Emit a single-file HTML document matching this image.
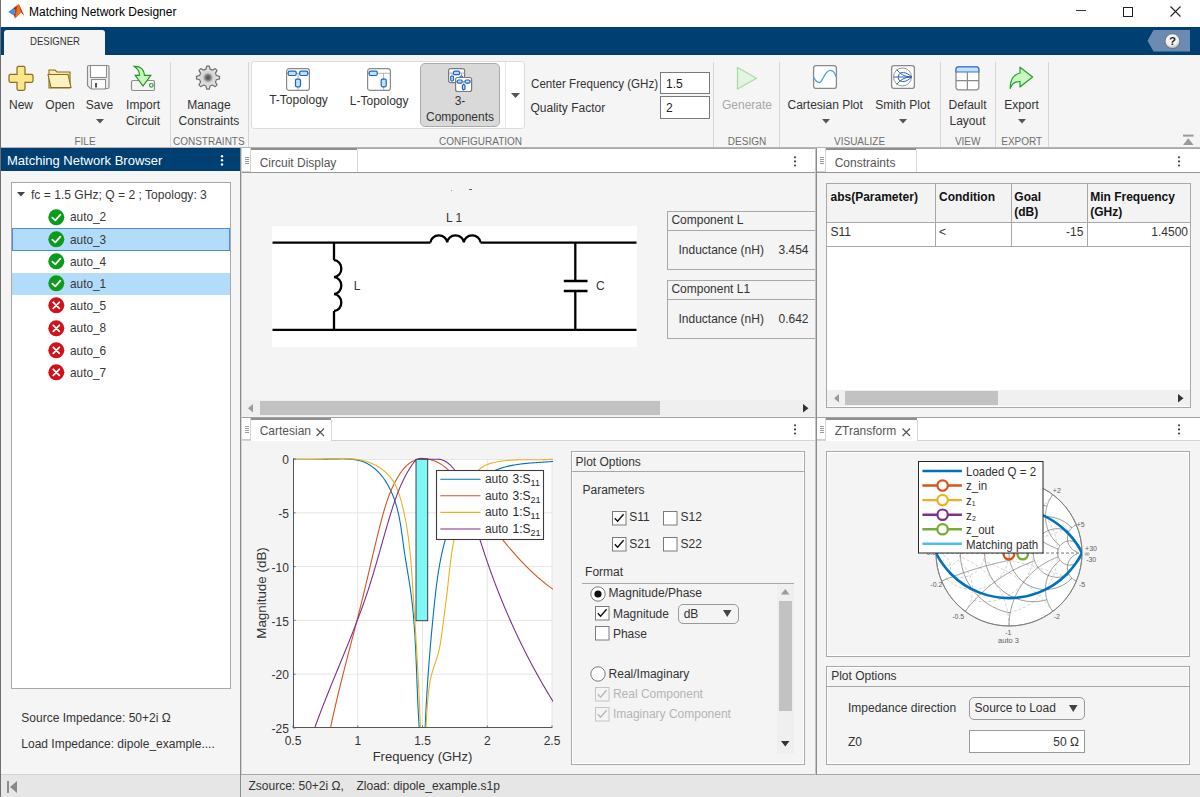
<!DOCTYPE html>
<html><head><meta charset="utf-8"><title>Matching Network Designer</title>
<style>
html,body{margin:0;padding:0;width:1200px;height:797px;overflow:hidden;background:#f5f5f5;}
body{position:relative;font-family:"Liberation Sans",sans-serif;}
.t{font-family:"Liberation Sans",sans-serif;}
svg text{font-family:"Liberation Sans",sans-serif;}
</style></head><body>
<div style="position:absolute;left:0px;top:0px;width:1200px;height:797px;background:#f5f5f5"></div>
<div style="position:absolute;left:0px;top:0px;width:1200px;height:27px;background:#ffffff"></div>
<svg style="position:absolute;left:0px;top:0px;overflow:visible;" width="30" height="24" viewBox="0 0 30 24">
<defs><linearGradient id="lg1" x1="0" y1="0" x2="1" y2="0.3">
<stop offset="0" stop-color="#6e1010"/><stop offset="0.45" stop-color="#c8401a"/><stop offset="0.7" stop-color="#f3a53a"/><stop offset="1" stop-color="#e04a1e"/></linearGradient></defs>
<polygon points="8.2,12 13.2,8.2 15.2,10.5 13.8,15.5" fill="#3d93de"/>
<polygon points="13.2,8.2 18.8,3.9 21.5,11 15.1,18.4 13.8,15.5 15.2,10.5" fill="url(#lg1)"/>
<polygon points="18.8,3.9 24.2,15.7 21.2,12.5 15.1,18.4" fill="#e8742a"/>
<polygon points="18.8,3.9 24.2,15.7 21.2,12.5" fill="#d6361c"/>
</svg>
<div class="t" style="position:absolute;left:29.00px;top:5.84px;font-size:12px;line-height:12px;color:#000000;font-weight:400;white-space:nowrap;">Matching Network Designer</div>
<div style="position:absolute;left:1076px;top:10px;width:10px;height:1px;background:#333"></div>
<div style="position:absolute;left:1123px;top:7px;width:9px;height:9px;border:1px solid #222;box-sizing:border-box;width:10px;height:10px"></div>
<svg style="position:absolute;left:1170px;top:6px;overflow:visible;" width="11" height="11" viewBox="0 0 11 11"><path d="M0.5,0.5 L10.5,10.5 M10.5,0.5 L0.5,10.5" stroke="#222" stroke-width="1.1"/></svg>
<div style="position:absolute;left:0px;top:27px;width:1200px;height:28px;background:#003f72"></div>
<div style="position:absolute;left:4px;top:30px;width:101px;height:25px;background:#f5f5f5;border-radius:3px 3px 0 0"></div>
<div class="t" style="position:absolute;left:54.50px;top:35.71px;font-size:10.5px;line-height:10.5px;color:#333333;font-weight:400;white-space:nowrap;transform:translateX(-50%) scaleX(0.913);transform-origin:center center;">DESIGNER</div>
<svg style="position:absolute;left:1147px;top:30px;overflow:visible;" width="44" height="22" viewBox="0 0 44 22"><polygon points="0.5,10.75 6.5,0 43,0 43,21.5 6.5,21.5" fill="#6b8cb0"/>
<defs><radialGradient id="hg" cx="0.45" cy="0.35" r="0.7"><stop offset="0" stop-color="#ffffff"/><stop offset="0.6" stop-color="#f0f0f0"/><stop offset="1" stop-color="#9a9a9a"/></radialGradient></defs><circle cx="25.5" cy="11.25" r="7.4" fill="url(#hg)" stroke="#555" stroke-width="0.6"/>
<text x="25.5" y="15.4" font-family="Liberation Sans" font-weight="700" font-size="11.5" text-anchor="middle" fill="#222">?</text></svg>
<div style="position:absolute;left:0px;top:147px;width:1200px;height:1px;background:#b4b4b4"></div>
<div style="position:absolute;left:170px;top:62px;width:1px;height:85px;background:#d6d6d6"></div>
<div style="position:absolute;left:248px;top:62px;width:1px;height:85px;background:#d6d6d6"></div>
<div style="position:absolute;left:713px;top:62px;width:1px;height:85px;background:#d6d6d6"></div>
<div style="position:absolute;left:779px;top:62px;width:1px;height:85px;background:#d6d6d6"></div>
<div style="position:absolute;left:940px;top:62px;width:1px;height:85px;background:#d6d6d6"></div>
<div style="position:absolute;left:995px;top:62px;width:1px;height:85px;background:#d6d6d6"></div>
<div style="position:absolute;left:1048px;top:62px;width:1px;height:85px;background:#d6d6d6"></div>
<div class="t" style="position:absolute;left:85.00px;top:136.53px;font-size:10px;line-height:10px;color:#6e6e6e;font-weight:400;white-space:nowrap;transform:translateX(-50%);">FILE</div>
<div class="t" style="position:absolute;left:208.80px;top:136.53px;font-size:10px;line-height:10px;color:#6e6e6e;font-weight:400;white-space:nowrap;transform:translateX(-50%);">CONSTRAINTS</div>
<div class="t" style="position:absolute;left:480.50px;top:136.53px;font-size:10px;line-height:10px;color:#6e6e6e;font-weight:400;white-space:nowrap;transform:translateX(-50%);">CONFIGURATION</div>
<div class="t" style="position:absolute;left:747.00px;top:136.53px;font-size:10px;line-height:10px;color:#6e6e6e;font-weight:400;white-space:nowrap;transform:translateX(-50%);">DESIGN</div>
<div class="t" style="position:absolute;left:859.60px;top:136.53px;font-size:10px;line-height:10px;color:#6e6e6e;font-weight:400;white-space:nowrap;transform:translateX(-50%);">VISUALIZE</div>
<div class="t" style="position:absolute;left:967.70px;top:136.53px;font-size:10px;line-height:10px;color:#6e6e6e;font-weight:400;white-space:nowrap;transform:translateX(-50%);">VIEW</div>
<div class="t" style="position:absolute;left:1021.70px;top:136.53px;font-size:10px;line-height:10px;color:#6e6e6e;font-weight:400;white-space:nowrap;transform:translateX(-50%);">EXPORT</div>
<svg style="position:absolute;left:8px;top:65px;overflow:visible;" width="26" height="26" viewBox="0 0 26 26"><path d="M10.5,1.3 h5 a1.5,1.5 0 0 1 1.5,1.5 v6.5 h6.5 a1.5,1.5 0 0 1 1.5,1.5 v5 a1.5,1.5 0 0 1 -1.5,1.5 h-6.5 v6.5 a1.5,1.5 0 0 1 -1.5,1.5 h-5 a1.5,1.5 0 0 1 -1.5,-1.5 v-6.5 h-6.5 a1.5,1.5 0 0 1 -1.5,-1.5 v-5 a1.5,1.5 0 0 1 1.5,-1.5 h6.5 v-6.5 a1.5,1.5 0 0 1 1.5,-1.5 z" fill="#fde68a" stroke="#8a6d1e" stroke-width="1.2"/></svg>
<div class="t" style="position:absolute;left:21.00px;top:98.84px;font-size:12px;line-height:12px;color:#333333;font-weight:400;white-space:nowrap;transform:translateX(-50%);">New</div>
<svg style="position:absolute;left:47px;top:68px;overflow:visible;" width="26" height="21" viewBox="0 0 26 21"><path d="M2,2 h6 l2,2 h13 v16 h-21 z" fill="#fbe9a6" stroke="#8a6d1e" stroke-width="1.1"/>
<path d="M1,6.5 h20 l3,13 h-20 z" fill="#fdf1bf" stroke="#8a6d1e" stroke-width="1.1"/></svg>
<div class="t" style="position:absolute;left:60.00px;top:98.84px;font-size:12px;line-height:12px;color:#333333;font-weight:400;white-space:nowrap;transform:translateX(-50%);">Open</div>
<svg style="position:absolute;left:86px;top:64px;overflow:visible;" width="26" height="26" viewBox="0 0 26 26"><path d="M2.5,1.5 h19 a1.5,1.5 0 0 1 1.5,1.5 v20 a1.5,1.5 0 0 1 -1.5,1.5 h-17 l-3,-3 v-18.5 a1.5,1.5 0 0 1 1.5,-1.5 z" fill="#efefef" stroke="#8c8c8c" stroke-width="1.2"/>
<rect x="4.5" y="1.5" width="16" height="12" fill="#ffffff" stroke="#8c8c8c" stroke-width="1.1"/>
<rect x="5.5" y="15.5" width="14" height="9.5" fill="#ffffff" stroke="#8c8c8c" stroke-width="1.1"/>
<rect x="9" y="19" width="2" height="4.5" fill="#555"/></svg>
<div class="t" style="position:absolute;left:99.50px;top:98.84px;font-size:12px;line-height:12px;color:#333333;font-weight:400;white-space:nowrap;transform:translateX(-50%);">Save</div>
<svg style="position:absolute;left:129px;top:65px;overflow:visible;" width="28" height="27" viewBox="0 0 28 27"><rect x="2.5" y="15.5" width="23" height="10" rx="1.5" fill="#f4f4f4" stroke="#8c8c8c" stroke-width="1.2"/>
<circle cx="22.3" cy="20.3" r="1.8" fill="none" stroke="#2ea02e" stroke-width="1.2"/>
<path d="M5,1.3 C11,1 15,4 15.5,10.3 L21.8,10.3 L14,21 L6.2,10.3 L10.5,10.3 C10.5,6 8.5,3.5 5,1.3 z" fill="#c8f5c0" stroke="#229a22" stroke-width="1.2"/></svg>
<div class="t" style="position:absolute;left:143.10px;top:98.84px;font-size:12px;line-height:12px;color:#333333;font-weight:400;white-space:nowrap;transform:translateX(-50%);">Import</div>
<div class="t" style="position:absolute;left:143.10px;top:114.84px;font-size:12px;line-height:12px;color:#333333;font-weight:400;white-space:nowrap;transform:translateX(-50%);">Circuit</div>
<svg style="position:absolute;left:96px;top:119px;overflow:visible;" width="8" height="5" viewBox="0 0 8 5"><polygon points="0,0 8,0 4,4.5" fill="#555"/></svg>
<svg style="position:absolute;left:195px;top:65px;overflow:visible;" width="26" height="26" viewBox="0 0 26 26"><defs><radialGradient id="gg"><stop offset="0" stop-color="#505050"/><stop offset="0.18" stop-color="#6a6a6a"/><stop offset="0.45" stop-color="#d6d6d6"/><stop offset="1" stop-color="#e8e8e8"/></radialGradient></defs>
<path d="M9.73,4.65 L10.87,4.27 L11.73,1.07 L14.27,1.07 L15.13,4.27 L16.31,4.66 L17.39,5.20 L20.25,3.55 L22.05,5.35 L20.40,8.21 L20.95,9.33 L21.33,10.47 L24.53,11.33 L24.53,13.87 L21.33,14.73 L20.94,15.91 L20.40,16.99 L22.05,19.85 L20.25,21.65 L17.39,20.00 L16.27,20.55 L15.13,20.93 L14.27,24.13 L11.73,24.13 L10.87,20.93 L9.69,20.54 L8.61,20.00 L5.75,21.65 L3.95,19.85 L5.60,16.99 L5.05,15.87 L4.67,14.73 L1.47,13.87 L1.47,11.33 L4.67,10.47 L5.06,9.29 L5.60,8.21 L3.95,5.35 L5.75,3.55 L8.61,5.20 z" fill="url(#gg)" stroke="#6e6e6e" stroke-width="1.2" stroke-linejoin="round"/></svg>
<div class="t" style="position:absolute;left:208.90px;top:98.64px;font-size:12px;line-height:12px;color:#333333;font-weight:400;white-space:nowrap;transform:translateX(-50%);">Manage</div>
<div class="t" style="position:absolute;left:208.90px;top:114.94px;font-size:12px;line-height:12px;color:#333333;font-weight:400;white-space:nowrap;transform:translateX(-50%);">Constraints</div>
<div style="position:absolute;left:251px;top:61px;width:274px;height:68px;background:#ffffff;border:1px solid #dcdcdc;border-radius:3px;box-sizing:border-box"></div>
<div style="position:absolute;left:505px;top:62px;width:1px;height:66px;background:#e4e4e4"></div>
<div style="position:absolute;left:420px;top:63px;width:80px;height:64px;background:#d9d9d9;border:1px solid #ababab;border-radius:5px;box-sizing:border-box"></div>
<svg style="position:absolute;left:511px;top:93px;overflow:visible;" width="9" height="6" viewBox="0 0 9 6"><polygon points="0,0 9,0 4.5,5" fill="#555"/></svg>
<svg style="position:absolute;left:286px;top:68px;overflow:visible;" width="24" height="23" viewBox="0 0 24 23"><rect x="0.6" y="0.6" width="22.8" height="21.8" rx="2.5" fill="#fff" stroke="#8a8a8a" stroke-width="1.2"/><path d="M1,5.3 H23 M12,5.3 V22" stroke="#a0a0a0" stroke-width="0.8"/><rect x="2.2" y="3.2" width="8" height="4.3" rx="1.2" fill="#bde3ff" stroke="#1f63c2" stroke-width="1.2"/><rect x="13.7" y="3.2" width="8" height="4.3" rx="1.2" fill="#bde3ff" stroke="#1f63c2" stroke-width="1.2"/><rect x="9.5" y="11.2" width="5" height="7.6" rx="1.2" fill="#bde3ff" stroke="#1f63c2" stroke-width="1.2"/></svg>
<div class="t" style="position:absolute;left:298.50px;top:94.44px;font-size:12px;line-height:12px;color:#333333;font-weight:400;white-space:nowrap;transform:translateX(-50%);">T-Topology</div>
<svg style="position:absolute;left:367px;top:68px;overflow:visible;" width="24" height="23" viewBox="0 0 24 23"><rect x="0.6" y="0.6" width="22.8" height="21.8" rx="2.5" fill="#fff" stroke="#8a8a8a" stroke-width="1.2"/><path d="M1,5.3 H23 M16.6,5.3 V22" stroke="#a0a0a0" stroke-width="0.8"/><rect x="2.2" y="3.2" width="8" height="4.3" rx="1.2" fill="#bde3ff" stroke="#1f63c2" stroke-width="1.2"/><rect x="14.2" y="11.2" width="5" height="7.6" rx="1.2" fill="#bde3ff" stroke="#1f63c2" stroke-width="1.2"/></svg>
<div class="t" style="position:absolute;left:379.20px;top:94.84px;font-size:12px;line-height:12px;color:#333333;font-weight:400;white-space:nowrap;transform:translateX(-50%);">L-Topology</div>
<svg style="position:absolute;left:448px;top:68px;overflow:visible;" width="25" height="24" viewBox="0 0 25 24"><rect x="0.6" y="0.6" width="16" height="14" rx="2" fill="#fff" stroke="#7a7a7a" stroke-width="1.2"/><path d="M1,5 H16.5 M4,5 V14.5 M13.5,5 V14.5" stroke="#a0a0a0" stroke-width="0.8"/><rect x="5.5" y="3.2" width="6" height="3.4" rx="1.2" fill="#bde3ff" stroke="#1f63c2" stroke-width="1.2"/><rect x="2.7" y="8" width="2.8" height="5" rx="1.2" fill="#bde3ff" stroke="#1f63c2" stroke-width="1.2"/><rect x="12" y="8" width="2.8" height="5" rx="1.2" fill="#bde3ff" stroke="#1f63c2" stroke-width="1.2"/><rect x="7.6" y="9.5" width="16" height="14" rx="2" fill="#fff" stroke="#7a7a7a" stroke-width="1.2"/><path d="M8,13.5 H23.5 M15.6,13.5 V23.5" stroke="#a0a0a0" stroke-width="0.8"/><rect x="9.2" y="12" width="5" height="3.2" rx="1.2" fill="#bde3ff" stroke="#1f63c2" stroke-width="1.2"/><rect x="17" y="12" width="5" height="3.2" rx="1.2" fill="#bde3ff" stroke="#1f63c2" stroke-width="1.2"/><rect x="14.4" y="16.7" width="2.6" height="5" rx="1.2" fill="#bde3ff" stroke="#1f63c2" stroke-width="1.2"/></svg>
<div class="t" style="position:absolute;left:460.00px;top:94.84px;font-size:12px;line-height:12px;color:#333333;font-weight:400;white-space:nowrap;transform:translateX(-50%);">3-</div>
<div class="t" style="position:absolute;left:460.00px;top:110.64px;font-size:12px;line-height:12px;color:#333333;font-weight:400;white-space:nowrap;transform:translateX(-50%);">Components</div>
<div class="t" style="position:absolute;left:530.50px;top:78.24px;font-size:12px;line-height:12px;color:#333333;font-weight:400;white-space:nowrap;transform:scaleX(0.968);transform-origin:left center;">Center Frequency (GHz)</div>
<div class="t" style="position:absolute;left:530.50px;top:102.04px;font-size:12px;line-height:12px;color:#333333;font-weight:400;white-space:nowrap;">Quality Factor</div>
<div style="position:absolute;left:660px;top:72px;width:50px;height:22px;background:#fff;border:1px solid #7a7a7a;box-sizing:border-box"></div>
<div style="position:absolute;left:660px;top:96px;width:50px;height:23px;background:#fff;border:1px solid #7a7a7a;box-sizing:border-box"></div>
<div class="t" style="position:absolute;left:666.00px;top:78.34px;font-size:12px;line-height:12px;color:#222;font-weight:400;white-space:nowrap;">1.5</div>
<div class="t" style="position:absolute;left:666.00px;top:102.34px;font-size:12px;line-height:12px;color:#222;font-weight:400;white-space:nowrap;">2</div>
<svg style="position:absolute;left:736px;top:66px;overflow:visible;" width="23" height="26" viewBox="0 0 23 26"><polygon points="1.5,1.5 20.5,12.3 1.5,23" fill="#e2f5e0" stroke="#a9dba5" stroke-width="1.3" stroke-linejoin="round"/></svg>
<div class="t" style="position:absolute;left:747.00px;top:98.54px;font-size:12px;line-height:12px;color:#a8a8a8;font-weight:400;white-space:nowrap;transform:translateX(-50%);">Generate</div>
<svg style="position:absolute;left:813px;top:65px;overflow:visible;" width="24" height="24" viewBox="0 0 24 24"><rect x="0.6" y="0.6" width="22.8" height="22.8" rx="2.5" fill="#fff" stroke="#8a8a8a" stroke-width="1.3"/><path d="M1,12.4 C3,17.5 6,18.5 8,16.5 C11,13 12,6 17,5.3 C20,5.2 22,8 23.2,12" fill="none" stroke="#4aa3ea" stroke-width="1.3"/></svg>
<div class="t" style="position:absolute;left:825.20px;top:98.84px;font-size:12px;line-height:12px;color:#333333;font-weight:400;white-space:nowrap;transform:translateX(-50%);">Cartesian Plot</div>
<svg style="position:absolute;left:822px;top:119px;overflow:visible;" width="8" height="5" viewBox="0 0 8 5"><polygon points="0,0 8,0 4,4.5" fill="#555"/></svg>
<svg style="position:absolute;left:891px;top:65px;overflow:visible;" width="24" height="24" viewBox="0 0 24 24"><rect x="0.6" y="0.6" width="22.8" height="22.8" rx="2.5" fill="#fff" stroke="#8a8a8a" stroke-width="1.3"/><circle cx="11.5" cy="12" r="9" fill="#fff" stroke="#888" stroke-width="0.9"/><path d="M3,12 H20.5 M5.7,4.5 C9,9 14,12 20.5,12 M5.7,19.5 C9,15 14,12 20.5,12 M20.5,12 C15,6 9,7 8,9.5 C7,12 7,14 8,15 C10,17 15,18 20.5,12" fill="none" stroke="#2a62c0" stroke-width="1"/></svg>
<div class="t" style="position:absolute;left:902.70px;top:98.84px;font-size:12px;line-height:12px;color:#333333;font-weight:400;white-space:nowrap;transform:translateX(-50%);">Smith Plot</div>
<svg style="position:absolute;left:899px;top:119px;overflow:visible;" width="8" height="5" viewBox="0 0 8 5"><polygon points="0,0 8,0 4,4.5" fill="#555"/></svg>
<svg style="position:absolute;left:955px;top:66px;overflow:visible;" width="25" height="25" viewBox="0 0 25 25"><rect x="1" y="0.8" width="22.8" height="23" rx="2.5" fill="#fff" stroke="#8a8a8a" stroke-width="1.3"/><path d="M3.3,0.8 H21.5 A2.3,2.3 0 0 1 23.8,3.1 V6 H1 V3.1 A2.3,2.3 0 0 1 3.3,0.8 z" fill="#bde3ff" stroke="#3a72c8" stroke-width="1.2"/><path d="M12.4,6 V23.8 M1,14.7 H23.8" stroke="#8a8a8a" stroke-width="1.2"/></svg>
<div class="t" style="position:absolute;left:967.50px;top:98.84px;font-size:12px;line-height:12px;color:#333333;font-weight:400;white-space:nowrap;transform:translateX(-50%);">Default</div>
<div class="t" style="position:absolute;left:967.50px;top:114.84px;font-size:12px;line-height:12px;color:#333333;font-weight:400;white-space:nowrap;transform:translateX(-50%);">Layout</div>
<svg style="position:absolute;left:1009px;top:66px;overflow:visible;" width="26" height="24" viewBox="0 0 26 24"><path d="M11,1.2 L23.6,11 L11,21 L11,15.5 C6,15.5 2.5,18 1.2,22.5 C1,16 3,9 11,7 z" fill="#c8f7bf" stroke="#22a02a" stroke-width="1.2" stroke-linejoin="round"/></svg>
<div class="t" style="position:absolute;left:1021.50px;top:98.84px;font-size:12px;line-height:12px;color:#333333;font-weight:400;white-space:nowrap;transform:translateX(-50%);">Export</div>
<svg style="position:absolute;left:1018px;top:119px;overflow:visible;" width="8" height="5" viewBox="0 0 8 5"><polygon points="0,0 8,0 4,4.5" fill="#555"/></svg>
<svg style="position:absolute;left:1183px;top:134px;overflow:visible;" width="11" height="11" viewBox="0 0 11 11"><rect x="0" y="0.6" width="10.6" height="2" fill="#9a9a9a"/><polygon points="0,11 10.6,11 5.3,4.3" fill="#9a9a9a"/></svg>
<div style="position:absolute;left:0px;top:148px;width:240px;height:23px;background:#003f72"></div>
<div class="t" style="position:absolute;left:7.00px;top:154.40px;font-size:13px;line-height:13px;color:#ffffff;font-weight:400;white-space:nowrap;">Matching Network Browser</div>
<svg style="position:absolute;left:219px;top:152px;overflow:visible;" width="6" height="16" viewBox="0 0 6 16"><circle cx="3" cy="4.2" r="1.2" fill="#fff"/><circle cx="3" cy="8.3" r="1.2" fill="#fff"/><circle cx="3" cy="12.5" r="1.2" fill="#fff"/></svg>
<div style="position:absolute;left:11px;top:182px;width:220px;height:507px;background:#ffffff;border:1px solid #a8a8a8;box-sizing:border-box"></div>
<svg style="position:absolute;left:17px;top:192px;overflow:visible;" width="9" height="6" viewBox="0 0 9 6"><polygon points="0,0 8,0 4,4.5" fill="#444"/></svg>
<div class="t" style="position:absolute;left:30.50px;top:187.90px;font-size:13px;line-height:13px;color:#383838;font-weight:400;white-space:nowrap;transform:scaleX(0.93);transform-origin:left center;">fc = 1.5 GHz; Q = 2 ; Topology: 3</div>
<svg style="position:absolute;left:48px;top:208.5px;overflow:visible;" width="17" height="17" viewBox="0 0 17 17"><circle cx="8.3" cy="8.3" r="8" fill="#0a9c18"/><path d="M4.3,8.6 L7.3,11.4 L12.4,5.6" fill="none" stroke="#fff" stroke-width="1.8" stroke-linecap="round" stroke-linejoin="round"/></svg>
<div class="t" style="position:absolute;left:70.00px;top:210.30px;font-size:13px;line-height:13px;color:#383838;font-weight:400;white-space:nowrap;transform:scaleX(0.91);transform-origin:left center;">auto_2</div>
<div style="position:absolute;left:12px;top:228.4px;width:218px;height:22.4px;background:#b3dcfb;border:1px solid #4a90d9;box-sizing:border-box"></div>
<svg style="position:absolute;left:48px;top:230.7px;overflow:visible;" width="17" height="17" viewBox="0 0 17 17"><circle cx="8.3" cy="8.3" r="8" fill="#0a9c18"/><path d="M4.3,8.6 L7.3,11.4 L12.4,5.6" fill="none" stroke="#fff" stroke-width="1.8" stroke-linecap="round" stroke-linejoin="round"/></svg>
<div class="t" style="position:absolute;left:70.00px;top:232.50px;font-size:13px;line-height:13px;color:#383838;font-weight:400;white-space:nowrap;transform:scaleX(0.91);transform-origin:left center;">auto_3</div>
<svg style="position:absolute;left:48px;top:252.9px;overflow:visible;" width="17" height="17" viewBox="0 0 17 17"><circle cx="8.3" cy="8.3" r="8" fill="#0a9c18"/><path d="M4.3,8.6 L7.3,11.4 L12.4,5.6" fill="none" stroke="#fff" stroke-width="1.8" stroke-linecap="round" stroke-linejoin="round"/></svg>
<div class="t" style="position:absolute;left:70.00px;top:254.70px;font-size:13px;line-height:13px;color:#383838;font-weight:400;white-space:nowrap;transform:scaleX(0.91);transform-origin:left center;">auto_4</div>
<div style="position:absolute;left:12px;top:272.8px;width:218px;height:22.4px;background:#b3dcfb"></div>
<svg style="position:absolute;left:48px;top:275.1px;overflow:visible;" width="17" height="17" viewBox="0 0 17 17"><circle cx="8.3" cy="8.3" r="8" fill="#0a9c18"/><path d="M4.3,8.6 L7.3,11.4 L12.4,5.6" fill="none" stroke="#fff" stroke-width="1.8" stroke-linecap="round" stroke-linejoin="round"/></svg>
<div class="t" style="position:absolute;left:70.00px;top:276.90px;font-size:13px;line-height:13px;color:#383838;font-weight:400;white-space:nowrap;transform:scaleX(0.91);transform-origin:left center;">auto_1</div>
<svg style="position:absolute;left:48px;top:297.3px;overflow:visible;" width="17" height="17" viewBox="0 0 17 17"><circle cx="8.3" cy="8.3" r="8" fill="#d0121b"/><path d="M5.3,5.3 L11.3,11.3 M11.3,5.3 L5.3,11.3" fill="none" stroke="#fff" stroke-width="1.8" stroke-linecap="round"/></svg>
<div class="t" style="position:absolute;left:70.00px;top:299.10px;font-size:13px;line-height:13px;color:#383838;font-weight:400;white-space:nowrap;transform:scaleX(0.91);transform-origin:left center;">auto_5</div>
<svg style="position:absolute;left:48px;top:319.5px;overflow:visible;" width="17" height="17" viewBox="0 0 17 17"><circle cx="8.3" cy="8.3" r="8" fill="#d0121b"/><path d="M5.3,5.3 L11.3,11.3 M11.3,5.3 L5.3,11.3" fill="none" stroke="#fff" stroke-width="1.8" stroke-linecap="round"/></svg>
<div class="t" style="position:absolute;left:70.00px;top:321.30px;font-size:13px;line-height:13px;color:#383838;font-weight:400;white-space:nowrap;transform:scaleX(0.91);transform-origin:left center;">auto_8</div>
<svg style="position:absolute;left:48px;top:341.7px;overflow:visible;" width="17" height="17" viewBox="0 0 17 17"><circle cx="8.3" cy="8.3" r="8" fill="#d0121b"/><path d="M5.3,5.3 L11.3,11.3 M11.3,5.3 L5.3,11.3" fill="none" stroke="#fff" stroke-width="1.8" stroke-linecap="round"/></svg>
<div class="t" style="position:absolute;left:70.00px;top:343.50px;font-size:13px;line-height:13px;color:#383838;font-weight:400;white-space:nowrap;transform:scaleX(0.91);transform-origin:left center;">auto_6</div>
<svg style="position:absolute;left:48px;top:363.9px;overflow:visible;" width="17" height="17" viewBox="0 0 17 17"><circle cx="8.3" cy="8.3" r="8" fill="#d0121b"/><path d="M5.3,5.3 L11.3,11.3 M11.3,5.3 L5.3,11.3" fill="none" stroke="#fff" stroke-width="1.8" stroke-linecap="round"/></svg>
<div class="t" style="position:absolute;left:70.00px;top:365.70px;font-size:13px;line-height:13px;color:#383838;font-weight:400;white-space:nowrap;transform:scaleX(0.91);transform-origin:left center;">auto_7</div>
<div class="t" style="position:absolute;left:21.30px;top:711.64px;font-size:12px;line-height:12px;color:#333333;font-weight:400;white-space:nowrap;">Source Impedance: 50+2i Ω</div>
<div class="t" style="position:absolute;left:21.30px;top:738.14px;font-size:12px;line-height:12px;color:#333333;font-weight:400;white-space:nowrap;">Load Impedance: dipole_example....</div>
<div style="position:absolute;left:240px;top:148px;width:1px;height:627px;background:#8c8c8c"></div>
<div style="position:absolute;left:241px;top:148px;width:1px;height:627px;background:#d0d0d0"></div>
<div style="position:absolute;left:0px;top:774px;width:1200px;height:23px;background:#e6e6e6"></div>
<div style="position:absolute;left:0px;top:774px;width:241px;height:1px;background:#d2d2d2"></div>
<div style="position:absolute;left:241px;top:774px;width:959px;height:1px;background:#a8a8a8"></div>
<div style="position:absolute;left:240px;top:774px;width:1px;height:23px;background:#8c8c8c"></div>
<svg style="position:absolute;left:7px;top:781px;overflow:visible;" width="11" height="13" viewBox="0 0 11 13"><rect x="0" y="0" width="2" height="12" fill="#8a8a8a"/><polygon points="10,0 10,12 3,6" fill="#8a8a8a"/></svg>
<div class="t" style="position:absolute;left:248.50px;top:779.84px;font-size:12px;line-height:12px;color:#333333;font-weight:400;white-space:nowrap;">Zsource: 50+2i Ω,</div>
<div class="t" style="position:absolute;left:356.50px;top:779.84px;font-size:12px;line-height:12px;color:#333333;font-weight:400;white-space:nowrap;">Zload: dipole_example.s1p</div>
<div style="position:absolute;left:0px;top:0px;width:1px;height:797px;background:#6e6e6e"></div>
<div style="position:absolute;left:242px;top:148px;width:573px;height:270px;background:#f4f4f4"></div>
<div style="position:absolute;left:242px;top:148px;width:573px;height:25px;background:#ffffff"></div>
<div style="position:absolute;left:251px;top:148px;width:564px;height:1px;background:#a8a8a8"></div>
<div style="position:absolute;left:242px;top:172px;width:573px;height:1px;background:#969696"></div>
<div style="position:absolute;left:242px;top:148px;width:9px;height:24px;background:#ffffff;border-right:1px solid #d4d4d4;border-bottom:1px solid #cfcfcf;box-sizing:border-box"></div>
<svg style="position:absolute;left:245px;top:157px;overflow:visible;" width="6" height="9" viewBox="0 0 6 9"><path d="M0,0.5 H4 M0,2.5 H4 M0,4.5 H4 M0,6.5 H4" stroke="#9a9a9a" stroke-width="1" shape-rendering="crispEdges"/></svg>
<div style="position:absolute;left:251px;top:148px;width:106px;height:2px;background:#8f8f8f"></div>
<div style="position:absolute;left:357px;top:150px;width:1px;height:22px;background:#d8d8d8"></div>
<div class="t" style="position:absolute;left:259.70px;top:156.84px;font-size:12px;line-height:12px;color:#555555;font-weight:400;white-space:nowrap;">Circuit Display</div>
<svg style="position:absolute;left:792.5px;top:156px;overflow:visible;" width="4" height="12" viewBox="0 0 4 12"><circle cx="2" cy="1.3" r="1.1" fill="#444"/><circle cx="2" cy="5.4" r="1.1" fill="#444"/><circle cx="2" cy="9.5" r="1.1" fill="#444"/></svg>
<div style="position:absolute;left:272.3px;top:225.5px;width:364.5px;height:121px;background:#ffffff"></div>
<svg style="position:absolute;left:272px;top:225px;overflow:visible;" width="365" height="121" viewBox="0 0 365 121">
<g fill="none" stroke="#000" stroke-width="2.3">
<path d="M0.5,17.6 H158.5 M208.5,17.6 H364.5"/>
<path d="M158.5,17.6 a8.33,7.2 0 0 1 16.67,0 a8.33,7.2 0 0 1 16.67,0 a8.33,7.2 0 0 1 16.67,0"/>
<path d="M0.5,104.8 H364.5"/>
<path d="M62,17.6 V35.2 M62,86 V104.8"/>
<path d="M62,35.2 a7.6,8.47 0 0 1 0,16.93 a7.6,8.47 0 0 1 0,16.93 a7.6,8.47 0 0 1 0,16.93"/>
<path d="M303.3,17.6 V56 M303.3,66 V104.8"/>
<path d="M291.8,56 H315.5 M291.8,66 H315.5"/>
</g></svg>
<div class="t" style="position:absolute;left:353.70px;top:280.34px;font-size:12px;line-height:12px;color:#333333;font-weight:400;white-space:nowrap;">L</div>
<div class="t" style="position:absolute;left:446.00px;top:212.34px;font-size:12px;line-height:12px;color:#333333;font-weight:400;white-space:nowrap;">L 1</div>
<div class="t" style="position:absolute;left:596.00px;top:280.34px;font-size:12px;line-height:12px;color:#333333;font-weight:400;white-space:nowrap;">C</div>
<div style="position:absolute;left:451px;top:190px;width:1px;height:1px;background:#999"></div>
<div style="position:absolute;left:469px;top:189px;width:3px;height:1px;background:#666"></div>
<div style="position:absolute;left:667px;top:211px;width:148px;height:59px;border:1px solid #a8a8a8;border-right:none;box-sizing:border-box"></div>
<div style="position:absolute;left:667px;top:230px;width:148px;height:1px;background:#a8a8a8"></div>
<div class="t" style="position:absolute;left:671.40px;top:214.04px;font-size:12px;line-height:12px;color:#333333;font-weight:400;white-space:nowrap;">Component L</div>
<div class="t" style="position:absolute;left:678.50px;top:243.94px;font-size:12px;line-height:12px;color:#333333;font-weight:400;white-space:nowrap;">Inductance (nH)</div>
<div class="t" style="position:absolute;right:391.50px;top:243.94px;font-size:12px;line-height:12px;color:#333333;font-weight:400;white-space:nowrap;">3.454</div>
<div style="position:absolute;left:667px;top:280px;width:148px;height:59px;border:1px solid #a8a8a8;border-right:none;box-sizing:border-box"></div>
<div style="position:absolute;left:667px;top:299px;width:148px;height:1px;background:#a8a8a8"></div>
<div class="t" style="position:absolute;left:671.40px;top:283.04px;font-size:12px;line-height:12px;color:#333333;font-weight:400;white-space:nowrap;">Component L1</div>
<div class="t" style="position:absolute;left:678.50px;top:312.94px;font-size:12px;line-height:12px;color:#333333;font-weight:400;white-space:nowrap;">Inductance (nH)</div>
<div class="t" style="position:absolute;right:391.50px;top:312.94px;font-size:12px;line-height:12px;color:#333333;font-weight:400;white-space:nowrap;">0.642</div>
<div style="position:absolute;left:243px;top:400px;width:572px;height:16px;background:#efefef"></div>
<div style="position:absolute;left:260px;top:401px;width:400px;height:14px;background:#c2c2c2"></div>
<svg style="position:absolute;left:248px;top:404px;overflow:visible;" width="6" height="9" viewBox="0 0 6 9"><polygon points="5,0 5,8.5 0,4.25" fill="#9a9a9a"/></svg>
<svg style="position:absolute;left:803px;top:404px;overflow:visible;" width="6" height="9" viewBox="0 0 6 9"><polygon points="0,0 0,8.5 5.5,4.25" fill="#333"/></svg>
<div style="position:absolute;left:242px;top:416px;width:573px;height:1px;background:#f4f4f4"></div>
<div style="position:absolute;left:242px;top:417px;width:573px;height:1px;background:#a0a0a0"></div>
<div style="position:absolute;left:815px;top:148px;width:1px;height:627px;background:#c4c4c4"></div>
<div style="position:absolute;left:816px;top:148px;width:1px;height:627px;background:#8c8c8c"></div>
<div style="position:absolute;left:817px;top:148px;width:383px;height:270px;background:#f4f4f4"></div>
<div style="position:absolute;left:817px;top:148px;width:383px;height:25px;background:#ffffff"></div>
<div style="position:absolute;left:826px;top:148px;width:374px;height:1px;background:#a8a8a8"></div>
<div style="position:absolute;left:817px;top:172px;width:383px;height:1px;background:#969696"></div>
<div style="position:absolute;left:817px;top:148px;width:9px;height:24px;background:#ffffff;border-right:1px solid #d4d4d4;border-bottom:1px solid #cfcfcf;box-sizing:border-box"></div>
<svg style="position:absolute;left:820px;top:157px;overflow:visible;" width="6" height="9" viewBox="0 0 6 9"><path d="M0,0.5 H4 M0,2.5 H4 M0,4.5 H4 M0,6.5 H4" stroke="#9a9a9a" stroke-width="1" shape-rendering="crispEdges"/></svg>
<div style="position:absolute;left:826px;top:148px;width:90px;height:2px;background:#8f8f8f"></div>
<div style="position:absolute;left:916px;top:150px;width:1px;height:22px;background:#d8d8d8"></div>
<div class="t" style="position:absolute;left:834.70px;top:156.84px;font-size:12px;line-height:12px;color:#555555;font-weight:400;white-space:nowrap;">Constraints</div>
<svg style="position:absolute;left:1177.4px;top:156px;overflow:visible;" width="4" height="12" viewBox="0 0 4 12"><circle cx="2" cy="1.3" r="1.1" fill="#444"/><circle cx="2" cy="5.4" r="1.1" fill="#444"/><circle cx="2" cy="9.5" r="1.1" fill="#444"/></svg>
<div style="position:absolute;left:826px;top:183px;width:365px;height:225px;background:#ffffff;border:1px solid #a8a8a8;box-sizing:border-box"></div>
<div style="position:absolute;left:827px;top:184px;width:363px;height:38px;background:#f3f3f3"></div>
<div style="position:absolute;left:827px;top:222px;width:363px;height:1px;background:#a8a8a8"></div>
<div style="position:absolute;left:827px;top:246px;width:363px;height:1px;background:#a8a8a8"></div>
<div style="position:absolute;left:935px;top:184px;width:1px;height:62px;background:#a8a8a8"></div>
<div style="position:absolute;left:1011px;top:184px;width:1px;height:62px;background:#a8a8a8"></div>
<div style="position:absolute;left:1087px;top:184px;width:1px;height:62px;background:#a8a8a8"></div>
<div class="t" style="position:absolute;left:830.50px;top:190.74px;font-size:12px;line-height:12px;color:#111111;font-weight:700;white-space:nowrap;">abs(Parameter)</div>
<div class="t" style="position:absolute;left:939.00px;top:190.74px;font-size:12px;line-height:12px;color:#111111;font-weight:700;white-space:nowrap;">Condition</div>
<div class="t" style="position:absolute;left:1014.30px;top:190.74px;font-size:12px;line-height:12px;color:#111111;font-weight:700;white-space:nowrap;">Goal</div>
<div class="t" style="position:absolute;left:1014.30px;top:205.54px;font-size:12px;line-height:12px;color:#111111;font-weight:700;white-space:nowrap;">(dB)</div>
<div class="t" style="position:absolute;left:1090.20px;top:190.74px;font-size:12px;line-height:12px;color:#111111;font-weight:700;white-space:nowrap;">Min Frequency</div>
<div class="t" style="position:absolute;left:1090.20px;top:205.54px;font-size:12px;line-height:12px;color:#111111;font-weight:700;white-space:nowrap;">(GHz)</div>
<div class="t" style="position:absolute;left:830.50px;top:226.24px;font-size:12px;line-height:12px;color:#333333;font-weight:400;white-space:nowrap;">S11</div>
<div class="t" style="position:absolute;left:939.00px;top:226.24px;font-size:12px;line-height:12px;color:#333333;font-weight:400;white-space:nowrap;">&lt;</div>
<div class="t" style="position:absolute;right:116.70px;top:226.24px;font-size:12px;line-height:12px;color:#333333;font-weight:400;white-space:nowrap;">-15</div>
<div class="t" style="position:absolute;right:12.00px;top:226.24px;font-size:12px;line-height:12px;color:#333333;font-weight:400;white-space:nowrap;">1.4500</div>
<div style="position:absolute;left:827px;top:390px;width:363px;height:16px;background:#f0f0f0"></div>
<div style="position:absolute;left:845px;top:391px;width:153px;height:14px;background:#c2c2c2"></div>
<svg style="position:absolute;left:834px;top:394px;overflow:visible;" width="6" height="9" viewBox="0 0 6 9"><polygon points="5,0 5,8.5 0,4.25" fill="#9a9a9a"/></svg>
<svg style="position:absolute;left:1178px;top:394px;overflow:visible;" width="6" height="9" viewBox="0 0 6 9"><polygon points="0,0 0,8.5 5.5,4.25" fill="#333"/></svg>
<div style="position:absolute;left:817px;top:417px;width:383px;height:1px;background:#a0a0a0"></div>
<div style="position:absolute;left:242px;top:418px;width:573px;height:356px;background:#f4f4f4"></div>
<div style="position:absolute;left:242px;top:418px;width:573px;height:23px;background:#ffffff"></div>
<div style="position:absolute;left:242px;top:440px;width:9px;height:1px;background:#d4d4d4"></div>
<div style="position:absolute;left:331px;top:440px;width:484px;height:1px;background:#d4d4d4"></div>
<div style="position:absolute;left:242px;top:418px;width:9px;height:22px;background:#ffffff;border-right:1px solid #d4d4d4;border-bottom:1px solid #cfcfcf;box-sizing:border-box"></div>
<svg style="position:absolute;left:245px;top:426px;overflow:visible;" width="6" height="9" viewBox="0 0 6 9"><path d="M0,0.5 H4 M0,2.5 H4 M0,4.5 H4 M0,6.5 H4" stroke="#9a9a9a" stroke-width="1" shape-rendering="crispEdges"/></svg>
<div style="position:absolute;left:251px;top:418px;width:80px;height:2px;background:#8f8f8f"></div>
<div style="position:absolute;left:331px;top:420px;width:1px;height:20px;background:#d8d8d8"></div>
<div class="t" style="position:absolute;left:259.70px;top:425.04px;font-size:12px;line-height:12px;color:#555555;font-weight:400;white-space:nowrap;">Cartesian</div>
<svg style="position:absolute;left:316.3px;top:428.3px;overflow:visible;" width="9" height="9" viewBox="0 0 9 9"><path d="M0.5,0.5 L8,8 M8,0.5 L0.5,8" stroke="#555" stroke-width="1.2"/></svg>
<svg style="position:absolute;left:792.5px;top:424.3px;overflow:visible;" width="4" height="12" viewBox="0 0 4 12"><circle cx="2" cy="1.3" r="1.1" fill="#444"/><circle cx="2" cy="5.4" r="1.1" fill="#444"/><circle cx="2" cy="9.5" r="1.1" fill="#444"/></svg>
<svg style="position:absolute;left:293px;top:459px;overflow:visible;" width="259" height="269" viewBox="0 0 259 269"><defs><clipPath id="axclip"><rect x="0" y="-1.5" width="260" height="270.5"/></clipPath></defs>
<rect x="0" y="0" width="259" height="269" fill="#fff"/><path d="M64.75,0 V269" stroke="#e6e6e6" stroke-width="1"/><path d="M129.50,0 V269" stroke="#e6e6e6" stroke-width="1"/><path d="M194.25,0 V269" stroke="#e6e6e6" stroke-width="1"/><path d="M259.00,0 V269" stroke="#e6e6e6" stroke-width="1"/><path d="M0,0.50 H259" stroke="#e6e6e6" stroke-width="1"/><path d="M0,53.80 H259" stroke="#e6e6e6" stroke-width="1"/><path d="M0,107.60 H259" stroke="#e6e6e6" stroke-width="1"/><path d="M0,161.40 H259" stroke="#e6e6e6" stroke-width="1"/><path d="M0,215.20 H259" stroke="#e6e6e6" stroke-width="1"/>
<g clip-path="url(#axclip)"><path d="M-2.95,-0.02 L-1.70,0.04 L-0.44,0.09 L0.80,0.14 L2.04,0.18 L3.28,0.22 L4.52,0.26 L5.75,0.29 L6.98,0.32 L8.20,0.34 L9.43,0.36 L10.65,0.37 L11.87,0.38 L13.09,0.39 L14.31,0.39 L15.53,0.39 L16.75,0.39 L17.97,0.38 L19.19,0.37 L20.40,0.36 L21.62,0.35 L22.85,0.33 L24.07,0.31 L25.29,0.29 L26.52,0.27 L27.75,0.25 L28.99,0.22 L30.22,0.20 L31.46,0.17 L32.70,0.14 L33.95,0.11 L35.20,0.09 L36.46,0.06 L37.72,0.03 L38.99,-0.01 L40.27,-0.04 L41.54,-0.07 L42.83,-0.10 L44.12,-0.12 L45.42,-0.15 L46.72,-0.17 L48.02,-0.18 L49.32,-0.18 L50.62,-0.18 L51.92,-0.16 L53.21,-0.12 L54.51,-0.07 L55.79,-0.01 L57.07,0.08 L58.34,0.19 L59.60,0.32 L60.85,0.48 L62.09,0.66 L63.32,0.87 L64.53,1.11 L65.73,1.39 L66.91,1.70 L68.07,2.04 L69.21,2.42 L70.33,2.83 L71.44,3.28 L72.53,3.76 L73.60,4.28 L74.65,4.83 L75.17,5.11 L75.68,5.41 L76.19,5.71 L76.70,6.01 L77.20,6.33 L77.69,6.65 L78.18,6.98 L78.67,7.32 L79.15,7.67 L79.63,8.02 L80.11,8.38 L80.58,8.74 L81.04,9.11 L81.50,9.49 L81.96,9.88 L82.41,10.27 L82.86,10.66 L83.30,11.07 L83.74,11.48 L84.17,11.89 L84.60,12.31 L85.03,12.74 L85.45,13.17 L85.87,13.61 L86.28,14.05 L86.69,14.50 L87.09,14.96 L87.49,15.41 L87.88,15.88 L88.28,16.35 L88.66,16.82 L89.04,17.30 L89.42,17.78 L89.80,18.27 L90.17,18.76 L90.53,19.26 L90.89,19.76 L91.25,20.27 L91.60,20.78 L91.95,21.29 L92.29,21.81 L92.63,22.33 L92.97,22.85 L93.30,23.38 L93.63,23.91 L93.95,24.45 L94.27,24.98 L94.59,25.53 L94.90,26.07 L95.20,26.62 L95.51,27.17 L95.81,27.72 L96.10,28.28 L96.39,28.83 L96.68,29.39 L96.96,29.96 L97.24,30.52 L97.51,31.09 L97.78,31.66 L98.05,32.23 L98.31,32.80 L98.57,33.38 L98.82,33.96 L99.07,34.53 L99.32,35.11 L99.56,35.70 L99.80,36.28 L100.03,36.86 L100.26,37.45 L100.49,38.03 L100.71,38.62 L100.93,39.21 L101.15,39.79 L101.36,40.38 L101.77,41.56 L102.16,42.75 L102.55,43.94 L102.92,45.13 L103.27,46.32 L103.61,47.52 L103.95,48.71 L104.26,49.91 L104.57,51.12 L104.87,52.32 L105.15,53.53 L105.43,54.74 L105.70,55.96 L105.95,57.17 L106.20,58.39 L106.44,59.61 L106.67,60.83 L106.90,62.05 L107.12,63.27 L107.33,64.50 L107.53,65.72 L107.73,66.95 L107.93,68.18 L108.12,69.41 L108.30,70.64 L108.48,71.87 L108.66,73.10 L108.83,74.33 L109.01,75.56 L109.18,76.80 L109.34,78.03 L109.51,79.26 L109.68,80.50 L109.84,81.73 L110.01,82.96 L110.17,84.20 L110.34,85.43 L110.51,86.66 L110.68,87.89 L110.85,89.12 L111.02,90.35 L111.20,91.58 L111.38,92.81 L111.56,94.04 L111.75,95.26 L111.94,96.49 L112.13,97.72 L112.33,98.94 L112.52,100.16 L112.72,101.39 L112.92,102.61 L113.12,103.83 L113.32,105.05 L113.52,106.28 L113.73,107.50 L113.93,108.72 L114.14,109.94 L114.34,111.16 L114.54,112.38 L114.75,113.60 L114.95,114.82 L115.15,116.04 L115.35,117.26 L115.56,118.48 L115.75,119.70 L115.95,120.92 L116.15,122.14 L116.34,123.36 L116.53,124.58 L116.72,125.80 L116.91,127.02 L117.09,128.25 L117.27,129.47 L117.45,130.69 L117.62,131.92 L117.79,133.14 L117.96,134.36 L118.12,135.59 L118.28,136.82 L118.44,138.04 L118.59,139.27 L118.74,140.50 L118.88,141.73 L119.03,142.95 L119.17,144.18 L119.30,145.41 L119.44,146.64 L119.57,147.87 L119.70,149.10 L119.82,150.34 L119.94,151.57 L120.06,152.80 L120.18,154.03 L120.30,155.27 L120.41,156.50 L120.52,157.73 L120.62,158.97 L120.73,160.20 L120.83,161.44 L120.93,162.68 L121.03,163.91 L121.12,165.15 L121.21,166.38 L121.30,167.62 L121.39,168.86 L121.48,170.10 L121.56,171.33 L121.64,172.57 L121.73,173.81 L121.80,175.05 L121.88,176.29 L121.96,177.53 L122.03,178.77 L122.10,180.01 L122.17,181.25 L122.24,182.49 L122.31,183.73 L122.37,184.97 L122.44,186.21 L122.50,187.45 L122.56,188.69 L122.62,189.94 L122.68,191.18 L122.74,192.42 L122.80,193.66 L122.85,194.90 L122.91,196.15 L122.96,197.39 L123.02,198.63 L123.07,199.87 L123.12,201.12 L123.17,202.36 L123.22,203.60 L123.27,204.84 L123.32,206.09 L123.37,207.33 L123.42,208.57 L123.47,209.82 L123.51,211.06 L123.56,212.30 L123.61,213.55 L123.66,214.79 L123.70,216.03 L123.75,217.27 L123.79,218.52 L123.84,219.76 L123.89,221.00 L123.93,222.25 L123.98,223.49 L124.03,224.73 L124.07,225.97 L124.12,227.22 L124.17,228.46 L124.22,229.70 L124.27,230.94 L124.32,232.19 L124.37,233.43 L124.42,234.67 L124.47,235.91 L124.52,237.15 L124.57,238.39 L124.63,239.63 L124.68,240.88 L124.73,242.12 L124.79,243.36 L124.85,244.60 L124.91,245.84 L124.97,247.08 L125.03,248.32 L125.09,249.56 L125.15,250.79 L125.22,252.03 L125.28,253.27 L125.35,254.51 L125.42,255.75 L125.49,256.98 L125.56,258.22 L125.63,259.46 L125.71,260.70 L125.78,261.93 L125.86,263.17 L125.94,264.40 L126.02,265.64 L126.11,266.87 L126.20,268.11 L126.28,269.34 L126.37,270.57 L126.47,271.81 L126.56,273.04 L126.66,274.27 L126.76,275.50 L126.86,276.73 L126.96,277.97 L127.07,279.20 L127.18,280.43 L127.29,281.66 L127.40,282.88 L127.52,284.11 L127.64,285.34 L127.70,285.95" fill="none" stroke="#0072BD" stroke-width="1.1"/><path d="M131.56,286.12 L131.60,284.90 L131.63,283.70 L131.67,282.49 L131.71,281.28 L131.75,280.07 L131.79,278.87 L131.83,277.66 L131.87,276.46 L131.92,275.25 L131.96,274.05 L132.01,272.85 L132.05,271.65 L132.10,270.45 L132.15,269.25 L132.20,268.05 L132.24,266.86 L132.29,265.66 L132.35,264.47 L132.40,263.27 L132.45,262.08 L132.50,260.89 L132.56,259.69 L132.61,258.50 L132.67,257.31 L132.72,256.12 L132.78,254.93 L132.84,253.74 L132.90,252.55 L132.96,251.37 L133.02,250.18 L133.08,248.99 L133.14,247.81 L133.21,246.62 L133.27,245.44 L133.33,244.25 L133.40,243.07 L133.47,241.89 L133.53,240.71 L133.60,239.52 L133.67,238.34 L133.74,237.16 L133.81,235.98 L133.88,234.80 L133.95,233.62 L134.02,232.44 L134.10,231.26 L134.17,230.09 L134.24,228.91 L134.32,227.73 L134.40,226.55 L134.47,225.37 L134.55,224.20 L134.63,223.02 L134.71,221.85 L134.79,220.67 L134.87,219.49 L134.95,218.32 L135.03,217.14 L135.12,215.97 L135.20,214.79 L135.28,213.62 L135.37,212.44 L135.45,211.27 L135.54,210.09 L135.63,208.92 L135.72,207.75 L135.80,206.57 L135.89,205.40 L135.98,204.22 L136.08,203.05 L136.17,201.88 L136.26,200.70 L136.35,199.53 L136.45,198.35 L136.54,197.18 L136.64,196.01 L136.73,194.83 L136.83,193.66 L136.92,192.48 L137.02,191.31 L137.12,190.13 L137.22,188.96 L137.32,187.78 L137.42,186.61 L137.52,185.43 L137.62,184.26 L137.73,183.08 L137.83,181.91 L137.93,180.73 L138.04,179.55 L138.14,178.38 L138.25,177.20 L138.36,176.02 L138.46,174.84 L138.57,173.67 L138.68,172.49 L138.79,171.31 L138.90,170.13 L139.01,168.95 L139.12,167.77 L139.23,166.59 L139.34,165.41 L139.46,164.23 L139.57,163.05 L139.69,161.87 L139.80,160.68 L139.92,159.50 L140.03,158.32 L140.15,157.13 L140.27,155.95 L140.39,154.76 L140.50,153.58 L140.62,152.39 L140.74,151.20 L140.86,150.01 L140.99,148.83 L141.11,147.64 L141.23,146.45 L141.35,145.26 L141.48,144.07 L141.60,142.87 L141.73,141.68 L141.86,140.49 L141.99,139.30 L142.12,138.11 L142.25,136.91 L142.38,135.72 L142.52,134.53 L142.66,133.34 L142.80,132.14 L142.94,130.95 L143.08,129.76 L143.23,128.57 L143.38,127.37 L143.53,126.18 L143.68,124.99 L143.84,123.80 L143.99,122.61 L144.16,121.42 L144.32,120.23 L144.49,119.04 L144.66,117.85 L144.83,116.66 L145.01,115.47 L145.19,114.29 L145.38,113.10 L145.56,111.92 L145.76,110.73 L145.95,109.55 L146.15,108.37 L146.36,107.19 L146.56,106.01 L146.78,104.83 L146.99,103.66 L147.21,102.48 L147.44,101.31 L147.67,100.13 L147.91,98.96 L148.15,97.79 L148.39,96.62 L148.64,95.46 L148.90,94.29 L149.16,93.13 L149.42,91.97 L149.69,90.81 L149.97,89.65 L150.25,88.49 L150.54,87.34 L150.84,86.18 L151.14,85.03 L151.44,83.89 L151.76,82.74 L152.08,81.60 L152.40,80.46 L152.73,79.32 L153.07,78.18 L153.42,77.05 L153.77,75.91 L154.13,74.78 L154.50,73.66 L154.87,72.53 L155.25,71.41 L155.64,70.29 L156.03,69.18 L156.43,68.06 L156.84,66.95 L157.26,65.85 L157.69,64.74 L158.12,63.64 L158.56,62.54 L159.01,61.45 L159.47,60.35 L159.94,59.27 L160.41,58.18 L160.89,57.10 L161.39,56.02 L161.89,54.94 L162.40,53.87 L162.91,52.80 L163.44,51.74 L163.98,50.68 L164.25,50.15 L164.52,49.62 L164.80,49.09 L165.08,48.57 L165.36,48.04 L165.64,47.52 L165.93,46.99 L166.22,46.47 L166.51,45.95 L166.80,45.43 L167.09,44.91 L167.39,44.39 L167.69,43.88 L168.00,43.36 L168.30,42.85 L168.61,42.34 L168.92,41.83 L169.23,41.32 L169.55,40.82 L169.87,40.31 L170.19,39.81 L170.51,39.31 L170.84,38.81 L171.16,38.31 L171.50,37.82 L171.83,37.33 L172.17,36.84 L172.50,36.35 L172.85,35.86 L173.19,35.38 L173.54,34.90 L173.89,34.42 L174.24,33.94 L174.60,33.47 L174.96,33.00 L175.32,32.53 L175.68,32.07 L176.05,31.60 L176.42,31.14 L176.79,30.69 L177.17,30.23 L177.54,29.78 L177.92,29.33 L178.31,28.89 L178.70,28.45 L179.09,28.01 L179.48,27.57 L179.88,27.14 L180.27,26.71 L180.68,26.29 L181.08,25.86 L181.49,25.45 L181.90,25.03 L182.31,24.62 L182.73,24.21 L183.15,23.81 L183.58,23.41 L184.00,23.02 L184.43,22.62 L184.86,22.24 L185.30,21.85 L185.74,21.47 L186.18,21.10 L186.63,20.72 L187.08,20.36 L187.53,19.99 L187.98,19.64 L188.44,19.28 L188.90,18.93 L189.37,18.59 L189.84,18.25 L190.31,17.91 L190.78,17.58 L191.26,17.25 L191.74,16.93 L192.23,16.61 L192.72,16.30 L193.70,15.69 L194.70,15.10 L195.71,14.53 L196.74,13.97 L197.77,13.43 L198.82,12.91 L199.87,12.41 L200.94,11.93 L202.02,11.46 L203.10,11.01 L204.20,10.58 L205.30,10.16 L206.42,9.76 L207.54,9.37 L208.67,9.00 L209.81,8.65 L210.95,8.31 L212.11,7.99 L213.27,7.69 L214.43,7.39 L215.60,7.12 L216.78,6.85 L217.96,6.60 L219.15,6.37 L220.34,6.14 L221.53,5.93 L222.73,5.73 L223.94,5.54 L225.14,5.37 L226.35,5.20 L227.56,5.04 L228.77,4.89 L229.98,4.75 L231.20,4.61 L232.41,4.49 L233.63,4.37 L234.84,4.26 L236.06,4.15 L237.27,4.05 L238.48,3.95 L239.69,3.86 L240.90,3.77 L242.11,3.69 L243.31,3.60 L244.51,3.52 L245.71,3.44 L246.90,3.37 L248.09,3.29 L249.27,3.21 L250.45,3.14 L251.63,3.06 L252.79,2.98 L253.95,2.90 L255.11,2.82 L256.26,2.73 L257.40,2.64 L258.53,2.55 L259.66,2.45 L260.77,2.34 L261.88,2.24" fill="none" stroke="#0072BD" stroke-width="1.1"/><path d="M34.12,286.03 L34.27,285.20 L34.43,284.38 L34.58,283.56 L34.74,282.74 L34.90,281.92 L35.06,281.10 L35.21,280.27 L35.37,279.45 L35.54,278.63 L35.70,277.81 L35.86,276.99 L36.02,276.17 L36.19,275.35 L36.35,274.53 L36.52,273.71 L36.68,272.89 L36.85,272.07 L37.02,271.25 L37.19,270.44 L37.36,269.62 L37.53,268.80 L37.70,267.98 L37.87,267.16 L38.04,266.34 L38.22,265.53 L38.39,264.71 L38.57,263.89 L38.74,263.07 L38.92,262.26 L39.09,261.44 L39.27,260.62 L39.45,259.81 L39.63,258.99 L39.81,258.17 L39.99,257.36 L40.17,256.54 L40.35,255.72 L40.53,254.91 L40.72,254.09 L40.90,253.28 L41.08,252.46 L41.27,251.65 L41.45,250.83 L41.64,250.02 L41.83,249.20 L42.01,248.39 L42.20,247.57 L42.39,246.76 L42.58,245.95 L42.77,245.13 L42.96,244.32 L43.15,243.50 L43.34,242.69 L43.53,241.88 L43.72,241.06 L43.91,240.25 L44.11,239.44 L44.30,238.62 L44.49,237.81 L44.69,237.00 L44.88,236.18 L45.08,235.37 L45.27,234.56 L45.47,233.75 L45.67,232.93 L45.86,232.12 L46.06,231.31 L46.26,230.50 L46.46,229.69 L46.66,228.87 L46.86,228.06 L47.06,227.25 L47.26,226.44 L47.46,225.63 L47.66,224.82 L47.86,224.00 L48.06,223.19 L48.26,222.38 L48.46,221.57 L48.67,220.76 L48.87,219.95 L49.07,219.14 L49.28,218.33 L49.48,217.52 L49.68,216.71 L49.89,215.90 L50.09,215.09 L50.30,214.28 L50.50,213.46 L50.71,212.65 L50.92,211.84 L51.12,211.03 L51.33,210.22 L51.53,209.41 L51.74,208.60 L51.95,207.79 L52.16,206.98 L52.36,206.17 L52.57,205.36 L52.78,204.55 L52.99,203.75 L53.20,202.94 L53.40,202.13 L53.61,201.32 L53.82,200.51 L54.03,199.70 L54.24,198.89 L54.45,198.08 L54.66,197.27 L54.87,196.46 L55.08,195.65 L55.29,194.84 L55.50,194.03 L55.71,193.22 L55.92,192.41 L56.13,191.60 L56.34,190.80 L56.55,189.99 L56.76,189.18 L56.97,188.37 L57.18,187.56 L57.39,186.75 L57.60,185.94 L57.81,185.13 L58.02,184.32 L58.23,183.51 L58.44,182.70 L58.65,181.90 L58.86,181.09 L59.08,180.28 L59.29,179.47 L59.50,178.66 L59.71,177.85 L59.92,177.04 L60.13,176.23 L60.34,175.42 L60.55,174.61 L60.76,173.80 L60.97,173.00 L61.18,172.19 L61.39,171.38 L61.60,170.57 L61.81,169.76 L62.02,168.95 L62.23,168.14 L62.44,167.33 L62.65,166.52 L62.86,165.71 L63.07,164.90 L63.28,164.09 L63.48,163.28 L63.69,162.47 L63.90,161.66 L64.11,160.86 L64.32,160.05 L64.53,159.24 L64.73,158.43 L64.94,157.62 L65.15,156.81 L65.36,156.00 L65.56,155.19 L65.77,154.38 L65.97,153.57 L66.18,152.76 L66.39,151.95 L66.59,151.14 L66.80,150.33 L67.00,149.52 L67.21,148.71 L67.41,147.90 L67.62,147.08 L67.82,146.27 L68.02,145.46 L68.23,144.65 L68.43,143.84 L68.63,143.03 L68.83,142.22 L69.04,141.41 L69.24,140.60 L69.44,139.79 L69.64,138.98 L69.84,138.16 L70.04,137.35 L70.24,136.54 L70.44,135.73 L70.64,134.92 L70.84,134.11 L71.03,133.29 L71.23,132.48 L71.43,131.67 L71.63,130.86 L71.82,130.05 L72.02,129.23 L72.21,128.42 L72.41,127.61 L72.60,126.79 L72.80,125.98 L72.99,125.17 L73.19,124.36 L73.38,123.54 L73.57,122.73 L73.76,121.92 L73.96,121.10 L74.15,120.29 L74.34,119.48 L74.53,118.66 L74.72,117.85 L74.91,117.04 L75.11,116.22 L75.30,115.41 L75.49,114.60 L75.68,113.78 L75.87,112.97 L76.06,112.16 L76.25,111.34 L76.44,110.53 L76.63,109.71 L76.82,108.90 L77.01,108.09 L77.20,107.27 L77.39,106.46 L77.58,105.65 L77.77,104.83 L77.96,104.02 L78.15,103.21 L78.34,102.39 L78.53,101.58 L78.72,100.77 L78.91,99.95 L79.10,99.14 L79.29,98.33 L79.48,97.51 L79.67,96.70 L79.86,95.89 L80.05,95.07 L80.24,94.26 L80.44,93.45 L80.63,92.63 L80.82,91.82 L81.01,91.01 L81.21,90.20 L81.40,89.38 L81.59,88.57 L81.79,87.76 L81.98,86.95 L82.17,86.13 L82.37,85.32 L82.56,84.51 L82.76,83.70 L82.96,82.89 L83.15,82.07 L83.35,81.26 L83.55,80.45 L83.74,79.64 L83.94,78.83 L84.14,78.02 L84.34,77.21 L84.54,76.40 L84.74,75.59 L84.94,74.78 L85.14,73.97 L85.35,73.16 L85.55,72.35 L85.75,71.54 L85.96,70.73 L86.16,69.92 L86.37,69.11 L86.57,68.30 L86.78,67.49 L86.99,66.68 L87.20,65.87 L87.40,65.07 L87.61,64.26 L87.83,63.45 L88.04,62.64 L88.25,61.84 L88.46,61.03 L88.68,60.22 L88.89,59.42 L89.11,58.61 L89.32,57.80 L89.54,57.00 L89.76,56.19 L89.99,55.39 L90.21,54.58 L90.44,53.78 L90.67,52.98 L90.90,52.18 L91.13,51.37 L91.36,50.57 L91.60,49.77 L91.84,48.97 L92.08,48.17 L92.33,47.38 L92.58,46.58 L92.83,45.78 L93.08,44.99 L93.34,44.19 L93.60,43.40 L93.87,42.61 L94.14,41.81 L94.41,41.02 L94.69,40.23 L94.97,39.44 L95.25,38.66 L95.54,37.87 L95.83,37.09 L96.13,36.30 L96.43,35.52 L96.74,34.74 L97.05,33.96 L97.37,33.18 L97.69,32.40 L98.02,31.63 L98.35,30.85 L98.69,30.08 L99.03,29.31 L99.38,28.54 L99.74,27.77 L100.10,27.00 L100.46,26.24 L100.84,25.47 L101.21,24.71 L101.60,23.95 L101.99,23.19 L102.39,22.44 L102.79,21.68 L103.21,20.93 L103.62,20.18 L104.05,19.43 L104.48,18.68 L104.92,17.94 L105.37,17.20 L105.82,16.47 L106.29,15.74 L106.76,15.02 L107.24,14.31 L107.73,13.60 L108.22,12.90 L108.72,12.22 L109.24,11.54 L109.76,10.88 L110.29,10.22 L110.83,9.58 L111.38,8.96 L111.94,8.34 L112.51,7.75 L113.08,7.17 L113.67,6.60 L114.27,6.05 L114.88,5.53 L115.50,5.02 L116.13,4.53 L116.77,4.06 L117.42,3.61 L118.08,3.18 L118.75,2.78 L119.43,2.40 L120.13,2.04 L120.84,1.71 L121.55,1.41 L122.28,1.13 L123.03,0.88 L123.78,0.66 L124.55,0.47 L125.32,0.30 L126.10,0.16 L126.89,0.04 L127.69,-0.05 L128.49,-0.12 L129.30,-0.16 L130.12,-0.17 L130.94,-0.16 L131.76,-0.13 L132.58,-0.08 L133.41,0.00 L134.23,0.10 L135.06,0.23 L135.88,0.37 L136.71,0.54 L137.53,0.73 L138.34,0.94 L139.15,1.17 L139.96,1.42 L140.76,1.69 L141.55,1.98 L142.34,2.29 L143.12,2.61 L143.89,2.96 L144.64,3.32 L145.39,3.71 L146.13,4.11 L146.86,4.52 L147.58,4.95 L148.29,5.40 L148.99,5.86 L149.68,6.34 L150.36,6.83 L151.03,7.33 L151.70,7.85 L152.35,8.38 L153.00,8.92 L153.64,9.48 L154.28,10.04 L154.90,10.62 L155.52,11.20 L156.14,11.79 L156.74,12.40 L157.34,13.01 L157.94,13.63 L158.52,14.26 L159.11,14.89 L159.68,15.53 L160.26,16.18 L160.82,16.83 L161.38,17.48 L161.94,18.14 L162.49,18.81 L163.04,19.48 L163.58,20.15 L164.13,20.82 L164.66,21.49 L165.20,22.17 L165.73,22.85 L166.25,23.52 L166.78,24.20 L167.30,24.88 L167.82,25.55 L168.34,26.23 L168.86,26.90 L169.37,27.57 L169.88,28.24 L170.39,28.91 L170.90,29.57 L171.41,30.24 L171.92,30.91 L172.42,31.57 L172.92,32.24 L173.43,32.90 L173.93,33.57 L174.43,34.23 L174.92,34.89 L175.42,35.55 L175.92,36.21 L176.41,36.87 L176.91,37.54 L177.40,38.20 L177.89,38.86 L178.39,39.52 L178.88,40.18 L179.37,40.84 L179.86,41.50 L180.35,42.16 L180.85,42.82 L181.34,43.48 L181.83,44.15 L182.32,44.81 L182.81,45.47 L183.30,46.14 L183.80,46.80 L184.29,47.46 L184.78,48.13 L185.27,48.79 L185.77,49.46 L186.26,50.12 L186.76,50.79 L187.25,51.46 L187.74,52.12 L188.24,52.79 L188.73,53.46 L189.23,54.12 L189.73,54.79 L190.22,55.46 L190.72,56.12 L191.22,56.79 L191.71,57.46 L192.21,58.12 L192.71,58.79 L193.21,59.46 L193.71,60.12 L194.21,60.79 L194.71,61.46 L195.21,62.12 L195.71,62.79 L196.22,63.46 L196.72,64.12 L197.22,64.79 L197.73,65.45 L198.24,66.12 L198.74,66.78 L199.25,67.45 L199.76,68.11 L200.26,68.77 L200.77,69.44 L201.28,70.10 L201.79,70.76 L202.31,71.42 L202.82,72.08 L203.33,72.74 L203.85,73.40 L204.36,74.06 L204.88,74.72 L205.40,75.38 L205.91,76.04 L206.43,76.69 L206.95,77.35 L207.47,78.01 L208.00,78.66 L208.52,79.31 L209.04,79.97 L209.57,80.62 L210.10,81.27 L210.62,81.92 L211.15,82.57 L211.68,83.22 L212.21,83.87 L212.75,84.51 L213.28,85.16 L213.81,85.80 L214.35,86.45 L214.89,87.09 L215.43,87.73 L215.97,88.37 L216.51,89.01 L217.05,89.65 L217.59,90.28 L218.14,90.92 L218.69,91.55 L219.23,92.18 L219.78,92.82 L220.33,93.45 L220.89,94.08 L221.44,94.70 L222.00,95.33 L222.55,95.95 L223.11,96.58 L223.67,97.20 L224.23,97.82 L224.80,98.44 L225.36,99.05 L225.93,99.67 L226.49,100.28 L227.06,100.90 L227.64,101.51 L228.21,102.12 L228.78,102.72 L229.36,103.33 L229.94,103.93 L230.52,104.53 L231.10,105.13 L231.68,105.73 L232.27,106.33 L232.85,106.92 L233.44,107.52 L234.03,108.11 L234.63,108.70 L235.22,109.29 L235.82,109.87 L236.42,110.45 L237.02,111.03 L237.62,111.61 L238.22,112.19 L238.83,112.77 L239.44,113.34 L240.05,113.91 L240.66,114.48 L241.27,115.04 L241.89,115.61 L242.51,116.17 L243.13,116.73 L243.75,117.29 L244.38,117.84 L245.00,118.39 L245.63,118.94 L246.26,119.49 L246.90,120.04 L247.53,120.58 L248.17,121.12 L248.81,121.66 L249.46,122.19 L250.10,122.73 L250.75,123.26 L251.40,123.78 L252.05,124.31 L252.71,124.83 L253.36,125.35 L254.02,125.87 L254.68,126.38 L255.35,126.89 L256.02,127.40 L256.68,127.91 L257.36,128.41 L258.03,128.91 L258.71,129.41 L259.39,129.91 L260.07,130.40 L260.75,130.89 L261.44,131.37 L262.13,131.85" fill="none" stroke="#D95319" stroke-width="1.1"/><path d="M-2.89,-0.09 L-1.65,0.02 L-0.41,0.11 L0.83,0.20 L2.07,0.27 L3.31,0.34 L4.56,0.39 L5.80,0.44 L7.04,0.48 L8.28,0.50 L9.52,0.53 L10.77,0.54 L12.01,0.54 L13.25,0.54 L14.50,0.54 L15.74,0.52 L16.99,0.50 L18.24,0.48 L19.49,0.45 L20.74,0.42 L21.99,0.38 L23.25,0.35 L24.50,0.30 L25.76,0.26 L27.02,0.21 L28.28,0.17 L29.54,0.12 L30.81,0.07 L32.08,0.02 L33.35,-0.03 L34.62,-0.08 L35.89,-0.13 L37.17,-0.17 L38.45,-0.22 L39.74,-0.26 L41.02,-0.30 L42.31,-0.33 L43.61,-0.36 L44.90,-0.39 L46.20,-0.41 L47.50,-0.43 L48.80,-0.43 L50.10,-0.43 L51.40,-0.42 L52.70,-0.39 L54.00,-0.36 L55.29,-0.31 L56.58,-0.24 L57.87,-0.17 L59.16,-0.07 L60.44,0.04 L61.72,0.17 L62.99,0.32 L64.26,0.48 L65.52,0.67 L66.77,0.88 L68.01,1.12 L69.25,1.38 L70.48,1.66 L71.69,1.97 L72.90,2.31 L74.10,2.67 L75.29,3.06 L76.46,3.48 L77.04,3.70 L77.62,3.93 L78.20,4.16 L78.77,4.40 L79.34,4.65 L79.91,4.90 L80.47,5.16 L81.03,5.43 L81.59,5.70 L82.14,5.98 L82.68,6.26 L83.23,6.56 L83.77,6.85 L84.30,7.16 L84.83,7.47 L85.36,7.79 L85.88,8.11 L86.40,8.44 L86.91,8.78 L87.42,9.12 L87.92,9.47 L88.42,9.82 L88.92,10.19 L89.41,10.55 L89.89,10.93 L90.37,11.31 L90.84,11.69 L91.31,12.08 L91.77,12.48 L92.23,12.88 L92.68,13.29 L93.13,13.71 L93.57,14.13 L94.01,14.55 L94.44,14.98 L94.86,15.42 L95.28,15.87 L95.69,16.32 L96.09,16.77 L96.49,17.23 L96.88,17.70 L97.27,18.17 L97.65,18.65 L98.02,19.13 L98.39,19.62 L98.75,20.11 L99.10,20.61 L99.45,21.11 L99.79,21.62 L100.12,22.14 L100.44,22.66 L100.76,23.18 L101.07,23.71 L101.37,24.25 L101.67,24.79 L101.96,25.33 L102.25,25.88 L102.53,26.44 L102.80,26.99 L103.07,27.56 L103.33,28.12 L103.59,28.69 L103.84,29.26 L104.08,29.84 L104.32,30.42 L104.56,31.00 L104.79,31.59 L105.02,32.18 L105.24,32.77 L105.46,33.36 L105.67,33.96 L105.88,34.56 L106.08,35.16 L106.28,35.76 L106.48,36.37 L106.67,36.98 L107.05,38.20 L107.42,39.42 L107.77,40.65 L108.12,41.89 L108.45,43.12 L108.78,44.36 L109.10,45.60 L109.41,46.84 L109.71,48.08 L110.01,49.32 L110.30,50.56 L110.59,51.80 L110.87,53.04 L111.14,54.28 L111.41,55.53 L111.67,56.77 L111.92,58.01 L112.17,59.26 L112.41,60.50 L112.65,61.74 L112.88,62.99 L113.11,64.24 L113.33,65.48 L113.54,66.73 L113.75,67.97 L113.96,69.22 L114.16,70.47 L114.35,71.72 L114.54,72.97 L114.73,74.21 L114.91,75.46 L115.09,76.71 L115.26,77.96 L115.43,79.21 L115.59,80.46 L115.75,81.71 L115.90,82.96 L116.06,84.22 L116.20,85.47 L116.35,86.72 L116.49,87.97 L116.63,89.22 L116.76,90.48 L116.89,91.73 L117.02,92.98 L117.14,94.23 L117.26,95.49 L117.38,96.74 L117.50,98.00 L117.61,99.25 L117.72,100.50 L117.83,101.76 L117.93,103.01 L118.04,104.27 L118.14,105.52 L118.24,106.78 L118.33,108.03 L118.43,109.29 L118.52,110.55 L118.62,111.80 L118.71,113.06 L118.79,114.31 L118.88,115.57 L118.97,116.82 L119.05,118.08 L119.14,119.34 L119.22,120.59 L119.31,121.85 L119.39,123.11 L119.47,124.36 L119.55,125.62 L119.63,126.88 L119.71,128.13 L119.79,129.39 L119.87,130.65 L119.95,131.90 L120.03,133.16 L120.11,134.42 L120.19,135.67 L120.27,136.93 L120.35,138.19 L120.43,139.44 L120.51,140.70 L120.59,141.96 L120.67,143.21 L120.75,144.47 L120.83,145.72 L120.91,146.98 L120.99,148.24 L121.07,149.49 L121.15,150.75 L121.24,152.01 L121.32,153.26 L121.40,154.52 L121.47,155.78 L121.55,157.03 L121.63,158.29 L121.71,159.55 L121.79,160.80 L121.87,162.06 L121.95,163.32 L122.03,164.57 L122.11,165.83 L122.19,167.09 L122.27,168.34 L122.35,169.60 L122.43,170.86 L122.50,172.11 L122.58,173.37 L122.66,174.63 L122.74,175.88 L122.81,177.14 L122.89,178.40 L122.97,179.65 L123.05,180.91 L123.12,182.17 L123.20,183.43 L123.28,184.68 L123.35,185.94 L123.43,187.20 L123.50,188.45 L123.58,189.71 L123.65,190.97 L123.73,192.22 L123.80,193.48 L123.87,194.74 L123.95,196.00 L124.02,197.25 L124.09,198.51 L124.17,199.77 L124.24,201.03 L124.31,202.28 L124.38,203.54 L124.45,204.80 L124.52,206.05 L124.59,207.31 L124.66,208.57 L124.73,209.83 L124.80,211.09 L124.87,212.34 L124.94,213.60 L125.01,214.86 L125.08,216.12 L125.14,217.37 L125.21,218.63 L125.28,219.89 L125.34,221.15 L125.41,222.41 L125.47,223.66 L125.54,224.92 L125.60,226.18 L125.66,227.44 L125.73,228.70 L125.79,229.95 L125.85,231.21 L125.91,232.47 L125.97,233.73 L126.03,234.99 L126.09,236.25 L126.15,237.51 L126.21,238.76 L126.27,240.02 L126.32,241.28 L126.38,242.54 L126.44,243.80 L126.49,245.06 L126.55,246.32 L126.60,247.58 L126.66,248.84 L126.71,250.10 L126.76,251.35 L126.81,252.61 L126.86,253.87 L126.91,255.13 L126.96,256.39 L127.01,257.65 L127.06,258.91 L127.11,260.17 L127.16,261.43 L127.20,262.69 L127.25,263.95 L127.29,265.21 L127.34,266.47 L127.38,267.73 L127.42,268.99 L127.46,270.25 L127.51,271.51 L127.55,272.77 L127.58,274.03 L127.62,275.29 L127.66,276.56 L127.70,277.82 L127.73,279.08 L127.77,280.34 L127.80,281.60 L127.84,282.86 L127.87,284.12 L127.90,285.38 L127.92,286.01" fill="none" stroke="#EDB120" stroke-width="1.1"/><path d="M132.49,286.00 L132.52,284.80 L132.55,283.59 L132.58,282.39 L132.61,281.19 L132.64,279.98 L132.67,278.78 L132.71,277.58 L132.74,276.38 L132.78,275.17 L132.82,273.97 L132.87,272.77 L132.91,271.56 L132.96,270.36 L133.00,269.16 L133.05,267.96 L133.11,266.75 L133.16,265.55 L133.22,264.35 L133.27,263.15 L133.33,261.95 L133.40,260.74 L133.46,259.54 L133.53,258.34 L133.60,257.14 L133.67,255.94 L133.75,254.73 L133.83,253.53 L133.91,252.33 L133.99,251.13 L134.08,249.93 L134.17,248.73 L134.26,247.52 L134.35,246.32 L134.45,245.12 L134.55,243.92 L134.65,242.72 L134.76,241.52 L134.87,240.32 L134.99,239.12 L135.10,237.92 L135.22,236.72 L135.34,235.52 L135.47,234.32 L135.60,233.12 L135.74,231.92 L135.88,230.72 L136.03,229.52 L136.19,228.33 L136.35,227.13 L136.52,225.94 L136.71,224.75 L136.90,223.56 L137.11,222.38 L137.33,221.19 L137.56,220.01 L137.80,218.84 L138.06,217.67 L138.34,216.50 L138.63,215.33 L138.93,214.17 L139.26,213.02 L139.60,211.86 L139.95,210.72 L140.31,209.57 L140.69,208.43 L141.07,207.28 L141.45,206.14 L141.84,205.00 L142.23,203.86 L142.61,202.72 L143.00,201.58 L143.38,200.44 L143.75,199.29 L144.11,198.15 L144.47,197.00 L144.81,195.84 L145.13,194.69 L145.44,193.53 L145.73,192.36 L146.01,191.19 L146.27,190.02 L146.53,188.84 L146.76,187.66 L146.99,186.48 L147.21,185.30 L147.42,184.11 L147.61,182.92 L147.80,181.73 L147.99,180.54 L148.16,179.35 L148.33,178.15 L148.50,176.95 L148.66,175.76 L148.82,174.56 L148.97,173.36 L149.13,172.17 L149.28,170.97 L149.44,169.77 L149.59,168.58 L149.75,167.38 L149.91,166.19 L150.06,164.99 L150.22,163.80 L150.37,162.61 L150.53,161.41 L150.69,160.22 L150.85,159.03 L151.00,157.84 L151.16,156.65 L151.32,155.45 L151.47,154.26 L151.63,153.07 L151.78,151.88 L151.94,150.69 L152.09,149.50 L152.25,148.31 L152.40,147.11 L152.55,145.92 L152.70,144.73 L152.85,143.54 L153.00,142.35 L153.15,141.15 L153.30,139.96 L153.45,138.77 L153.59,137.57 L153.74,136.38 L153.88,135.19 L154.02,133.99 L154.16,132.79 L154.30,131.60 L154.44,130.40 L154.57,129.20 L154.71,128.01 L154.84,126.81 L154.97,125.61 L155.10,124.41 L155.23,123.21 L155.36,122.01 L155.49,120.81 L155.62,119.61 L155.75,118.41 L155.88,117.20 L156.01,116.00 L156.15,114.80 L156.28,113.60 L156.41,112.40 L156.55,111.20 L156.68,110.00 L156.82,108.80 L156.96,107.60 L157.10,106.40 L157.24,105.20 L157.39,104.01 L157.54,102.81 L157.69,101.61 L157.84,100.42 L158.00,99.22 L158.16,98.03 L158.32,96.83 L158.48,95.64 L158.65,94.45 L158.83,93.26 L159.01,92.07 L159.19,90.88 L159.38,89.69 L159.57,88.51 L159.76,87.32 L159.96,86.14 L160.17,84.96 L160.38,83.78 L160.60,82.60 L160.82,81.42 L161.05,80.25 L161.28,79.07 L161.52,77.90 L161.77,76.73 L162.02,75.56 L162.28,74.39 L162.54,73.23 L162.81,72.06 L163.09,70.90 L163.37,69.74 L163.66,68.58 L163.95,67.42 L164.25,66.26 L164.55,65.10 L164.86,63.95 L165.17,62.79 L165.49,61.64 L165.81,60.48 L166.14,59.33 L166.47,58.18 L166.81,57.03 L167.15,55.88 L167.50,54.73 L167.85,53.58 L168.21,52.43 L168.57,51.28 L168.93,50.13 L169.30,48.98 L169.68,47.83 L170.06,46.68 L170.44,45.54 L170.82,44.39 L171.22,43.24 L171.61,42.09 L172.01,40.94 L172.41,39.80 L172.82,38.65 L173.23,37.50 L173.64,36.35 L174.06,35.20 L174.48,34.05 L174.91,32.90 L175.34,31.75 L175.77,30.60 L176.20,29.44 L176.64,28.29 L177.08,27.14 L177.53,25.98 L177.75,25.40 L177.98,24.83 L178.21,24.25 L178.44,23.68 L178.67,23.11 L178.90,22.54 L179.14,21.97 L179.39,21.40 L179.63,20.84 L179.88,20.29 L180.14,19.73 L180.40,19.18 L180.67,18.64 L180.94,18.10 L181.22,17.57 L181.50,17.04 L181.79,16.52 L182.09,16.01 L182.40,15.50 L182.71,15.00 L183.03,14.51 L183.36,14.03 L183.70,13.55 L184.05,13.08 L184.41,12.63 L184.77,12.18 L185.15,11.74 L185.54,11.32 L185.94,10.90 L186.35,10.50 L186.77,10.10 L187.20,9.72 L187.64,9.35 L188.10,8.99 L188.56,8.64 L189.03,8.31 L189.51,7.98 L190.01,7.67 L190.51,7.36 L191.01,7.07 L192.06,6.52 L193.13,6.01 L194.23,5.54 L195.36,5.11 L196.51,4.72 L197.67,4.36 L198.86,4.03 L200.05,3.73 L201.25,3.44 L202.45,3.18 L203.65,2.94 L204.86,2.72 L206.06,2.51 L207.26,2.31 L208.47,2.13 L209.67,1.97 L210.88,1.81 L212.08,1.68 L213.28,1.55 L214.49,1.43 L215.69,1.33 L216.90,1.24 L218.10,1.16 L219.30,1.08 L220.51,1.02 L221.71,0.96 L222.91,0.92 L224.12,0.88 L225.32,0.84 L226.52,0.81 L227.73,0.79 L228.93,0.78 L230.13,0.76 L231.34,0.75 L232.54,0.75 L233.74,0.74 L234.95,0.74 L236.15,0.74 L237.35,0.75 L238.55,0.75 L239.76,0.75 L240.96,0.75 L242.16,0.75 L243.36,0.74 L244.57,0.74 L245.77,0.73 L246.97,0.72 L248.17,0.70 L249.38,0.68 L250.58,0.65 L251.78,0.62 L252.98,0.58 L254.18,0.53 L255.39,0.48 L256.59,0.41 L257.79,0.34 L258.99,0.26 L260.19,0.17 L261.39,0.07 L261.99,0.01" fill="none" stroke="#EDB120" stroke-width="1.1"/><path d="M15.90,285.94 L16.21,284.99 L16.52,284.03 L16.84,283.07 L17.15,282.12 L17.47,281.17 L17.79,280.21 L18.11,279.26 L18.43,278.30 L18.76,277.35 L19.09,276.40 L19.41,275.45 L19.74,274.50 L20.07,273.55 L20.40,272.60 L20.74,271.65 L21.07,270.70 L21.41,269.75 L21.75,268.80 L22.09,267.85 L22.43,266.90 L22.77,265.96 L23.11,265.01 L23.46,264.06 L23.80,263.12 L24.15,262.17 L24.50,261.23 L24.85,260.28 L25.20,259.34 L25.55,258.39 L25.91,257.45 L26.26,256.50 L26.62,255.56 L26.97,254.62 L27.33,253.67 L27.69,252.73 L28.05,251.79 L28.41,250.85 L28.78,249.91 L29.14,248.97 L29.50,248.02 L29.87,247.08 L30.23,246.14 L30.60,245.20 L30.97,244.26 L31.34,243.32 L31.71,242.38 L32.08,241.44 L32.45,240.51 L32.82,239.57 L33.19,238.63 L33.56,237.69 L33.94,236.75 L34.31,235.81 L34.69,234.88 L35.06,233.94 L35.44,233.00 L35.82,232.06 L36.19,231.13 L36.57,230.19 L36.95,229.25 L37.33,228.32 L37.71,227.38 L38.09,226.44 L38.47,225.51 L38.85,224.57 L39.23,223.63 L39.61,222.70 L40.00,221.76 L40.38,220.83 L40.76,219.89 L41.14,218.95 L41.53,218.02 L41.91,217.08 L42.30,216.15 L42.68,215.21 L43.06,214.28 L43.45,213.34 L43.83,212.41 L44.22,211.47 L44.60,210.54 L44.99,209.60 L45.37,208.67 L45.76,207.73 L46.14,206.80 L46.52,205.86 L46.91,204.93 L47.29,203.99 L47.68,203.06 L48.06,202.12 L48.45,201.18 L48.83,200.25 L49.22,199.31 L49.60,198.38 L49.98,197.44 L50.37,196.51 L50.75,195.57 L51.13,194.64 L51.52,193.70 L51.90,192.76 L52.28,191.83 L52.66,190.89 L53.04,189.96 L53.42,189.02 L53.80,188.08 L54.18,187.15 L54.56,186.21 L54.94,185.27 L55.32,184.34 L55.70,183.40 L56.08,182.46 L56.45,181.52 L56.83,180.59 L57.20,179.65 L57.58,178.71 L57.95,177.77 L58.33,176.83 L58.70,175.89 L59.07,174.95 L59.44,174.02 L59.81,173.08 L60.18,172.14 L60.55,171.20 L60.92,170.26 L61.29,169.32 L61.66,168.37 L62.02,167.43 L62.39,166.49 L62.75,165.55 L63.11,164.61 L63.47,163.67 L63.83,162.73 L64.19,161.78 L64.55,160.84 L64.91,159.90 L65.27,158.95 L65.62,158.01 L65.98,157.06 L66.33,156.12 L66.68,155.17 L67.03,154.23 L67.38,153.28 L67.73,152.34 L68.08,151.39 L68.42,150.44 L68.77,149.50 L69.11,148.55 L69.45,147.60 L69.79,146.65 L70.13,145.70 L70.47,144.75 L70.80,143.81 L71.14,142.86 L71.47,141.90 L71.80,140.95 L72.13,140.00 L72.46,139.05 L72.79,138.10 L73.11,137.15 L73.44,136.19 L73.76,135.24 L74.08,134.28 L74.40,133.33 L74.72,132.37 L75.03,131.42 L75.35,130.46 L75.66,129.50 L75.97,128.55 L76.28,127.59 L76.58,126.63 L76.89,125.67 L77.19,124.71 L77.49,123.75 L77.80,122.79 L78.09,121.83 L78.39,120.87 L78.69,119.91 L78.98,118.95 L79.28,117.99 L79.57,117.02 L79.86,116.06 L80.15,115.10 L80.44,114.13 L80.73,113.17 L81.02,112.20 L81.31,111.24 L81.59,110.27 L81.88,109.31 L82.16,108.34 L82.44,107.38 L82.72,106.41 L83.01,105.44 L83.29,104.47 L83.57,103.51 L83.85,102.54 L84.12,101.57 L84.40,100.60 L84.68,99.63 L84.96,98.66 L85.23,97.70 L85.51,96.73 L85.79,95.76 L86.06,94.79 L86.34,93.82 L86.61,92.85 L86.89,91.87 L87.16,90.90 L87.44,89.93 L87.71,88.96 L87.99,87.99 L88.26,87.02 L88.54,86.05 L88.81,85.08 L89.09,84.10 L89.36,83.13 L89.64,82.16 L89.91,81.19 L90.19,80.21 L90.46,79.24 L90.74,78.27 L91.02,77.30 L91.29,76.32 L91.57,75.35 L91.85,74.38 L92.13,73.40 L92.41,72.43 L92.69,71.46 L92.97,70.48 L93.25,69.51 L93.53,68.54 L93.81,67.56 L94.10,66.59 L94.38,65.62 L94.67,64.65 L94.95,63.67 L95.24,62.70 L95.53,61.73 L95.82,60.75 L96.11,59.78 L96.40,58.81 L96.69,57.83 L96.99,56.86 L97.28,55.89 L97.58,54.92 L97.88,53.95 L98.18,52.98 L98.49,52.01 L98.79,51.04 L99.10,50.07 L99.41,49.10 L99.72,48.13 L100.04,47.17 L100.35,46.20 L100.67,45.24 L101.00,44.28 L101.33,43.32 L101.66,42.36 L101.99,41.40 L102.33,40.45 L102.67,39.49 L103.01,38.54 L103.36,37.59 L103.71,36.64 L104.07,35.69 L104.43,34.75 L104.79,33.81 L105.16,32.87 L105.53,31.93 L105.91,31.00 L106.29,30.06 L106.68,29.13 L107.07,28.21 L107.47,27.28 L107.87,26.36 L108.28,25.44 L108.70,24.53 L109.12,23.61 L109.54,22.70 L109.97,21.80 L110.41,20.89 L110.85,20.00 L111.30,19.10 L111.76,18.21 L112.22,17.32 L112.69,16.43 L113.16,15.55 L113.65,14.68 L114.14,13.80 L114.63,12.93 L115.14,12.07 L115.65,11.21 L116.16,10.35 L116.69,9.50 L117.22,8.65 L117.76,7.81 L118.31,6.97 L118.87,6.14 L119.44,5.31 L120.02,4.50 L120.62,3.72 L121.24,2.97 L121.89,2.27 L122.57,1.62 L123.28,1.03 L124.04,0.51 L124.84,0.08 L125.69,-0.27 L126.59,-0.51 L127.55,-0.65 L128.57,-0.68 L129.64,-0.62 L130.75,-0.49 L131.88,-0.33 L133.02,-0.16 L134.16,-0.01 L135.30,0.11 L136.41,0.19 L137.52,0.22 L138.60,0.23 L139.67,0.22 L140.73,0.21 L141.77,0.19 L142.79,0.18 L143.80,0.18 L144.79,0.21 L145.77,0.28 L146.73,0.39 L147.68,0.55 L148.61,0.77 L149.53,1.06 L150.43,1.40 L151.31,1.81 L152.18,2.26 L153.02,2.75 L153.85,3.29 L154.65,3.86 L155.43,4.46 L156.19,5.08 L156.93,5.72 L157.64,6.39 L158.33,7.07 L159.00,7.77 L159.65,8.50 L160.28,9.23 L160.89,9.99 L161.48,10.76 L162.06,11.55 L162.61,12.35 L163.15,13.17 L163.67,14.00 L164.18,14.85 L164.67,15.71 L165.15,16.58 L165.61,17.46 L166.06,18.35 L166.50,19.25 L166.93,20.17 L167.34,21.09 L167.75,22.02 L168.14,22.96 L168.53,23.90 L168.90,24.86 L169.27,25.81 L169.63,26.78 L169.99,27.75 L170.33,28.72 L170.68,29.70 L171.01,30.68 L171.35,31.66 L171.68,32.64 L172.00,33.62 L172.33,34.61 L172.65,35.59 L172.97,36.58 L173.29,37.56 L173.61,38.54 L173.93,39.53 L174.25,40.51 L174.56,41.49 L174.88,42.47 L175.19,43.45 L175.51,44.43 L175.82,45.41 L176.13,46.38 L176.44,47.36 L176.75,48.34 L177.06,49.31 L177.37,50.29 L177.68,51.26 L177.99,52.23 L178.29,53.21 L178.60,54.18 L178.91,55.15 L179.21,56.12 L179.52,57.09 L179.82,58.07 L180.13,59.03 L180.43,60.00 L180.74,60.97 L181.04,61.94 L181.34,62.91 L181.65,63.87 L181.95,64.84 L182.26,65.81 L182.56,66.77 L182.86,67.74 L183.16,68.70 L183.47,69.67 L183.77,70.63 L184.07,71.59 L184.38,72.55 L184.68,73.52 L184.99,74.48 L185.29,75.44 L185.59,76.40 L185.90,77.36 L186.20,78.32 L186.51,79.28 L186.81,80.24 L187.12,81.19 L187.43,82.15 L187.74,83.11 L188.04,84.07 L188.35,85.02 L188.66,85.98 L188.97,86.93 L189.28,87.89 L189.59,88.84 L189.90,89.80 L190.22,90.75 L190.53,91.71 L190.84,92.66 L191.16,93.61 L191.48,94.56 L191.79,95.52 L192.11,96.47 L192.43,97.42 L192.75,98.37 L193.07,99.32 L193.39,100.27 L193.72,101.22 L194.04,102.17 L194.37,103.12 L194.70,104.07 L195.03,105.02 L195.36,105.97 L195.69,106.92 L196.02,107.86 L196.35,108.81 L196.69,109.76 L197.03,110.71 L197.36,111.65 L197.70,112.60 L198.04,113.54 L198.39,114.49 L198.73,115.44 L199.07,116.38 L199.42,117.32 L199.77,118.27 L200.12,119.21 L200.47,120.16 L200.82,121.10 L201.17,122.04 L201.53,122.98 L201.88,123.93 L202.24,124.87 L202.60,125.81 L202.96,126.75 L203.32,127.69 L203.68,128.63 L204.04,129.57 L204.41,130.51 L204.77,131.45 L205.14,132.39 L205.51,133.33 L205.88,134.26 L206.25,135.20 L206.63,136.14 L207.00,137.07 L207.38,138.01 L207.75,138.94 L208.13,139.88 L208.51,140.81 L208.89,141.75 L209.28,142.68 L209.66,143.61 L210.04,144.55 L210.43,145.48 L210.82,146.41 L211.21,147.34 L211.60,148.27 L211.99,149.20 L212.38,150.13 L212.78,151.06 L213.17,151.99 L213.57,152.92 L213.97,153.85 L214.37,154.77 L214.77,155.70 L215.17,156.63 L215.58,157.55 L215.98,158.48 L216.39,159.40 L216.80,160.33 L217.21,161.25 L217.62,162.17 L218.03,163.09 L218.44,164.02 L218.86,164.94 L219.27,165.86 L219.69,166.78 L220.11,167.70 L220.53,168.62 L220.95,169.54 L221.37,170.45 L221.80,171.37 L222.22,172.29 L222.65,173.20 L223.08,174.12 L223.51,175.03 L223.94,175.95 L224.37,176.86 L224.80,177.77 L225.24,178.69 L225.67,179.60 L226.11,180.51 L226.55,181.42 L226.99,182.33 L227.43,183.24 L227.87,184.15 L228.32,185.05 L228.76,185.96 L229.21,186.87 L229.66,187.77 L230.11,188.68 L230.56,189.58 L231.01,190.49 L231.46,191.39 L231.92,192.29 L232.37,193.19 L232.83,194.10 L233.29,195.00 L233.75,195.90 L234.21,196.79 L234.68,197.69 L235.14,198.59 L235.61,199.49 L236.07,200.38 L236.54,201.28 L237.01,202.17 L237.48,203.07 L237.95,203.96 L238.43,204.85 L238.90,205.74 L239.38,206.63 L239.86,207.52 L240.33,208.41 L240.81,209.30 L241.30,210.19 L241.78,211.08 L242.26,211.96 L242.75,212.85 L243.24,213.73 L243.72,214.62 L244.21,215.50 L244.71,216.38 L245.20,217.26 L245.69,218.14 L246.19,219.02 L246.68,219.90 L247.18,220.78 L247.68,221.66 L248.18,222.54 L248.68,223.41 L249.18,224.29 L249.69,225.16 L250.19,226.03 L250.70,226.91 L251.21,227.78 L251.72,228.65 L252.23,229.52 L252.74,230.39 L253.26,231.26 L253.77,232.12 L254.29,232.99 L254.81,233.85 L255.32,234.72 L255.85,235.58 L256.37,236.45 L256.89,237.31 L257.41,238.17 L257.94,239.03 L258.47,239.89 L259.00,240.75 L259.53,241.60 L260.06,242.46 L260.59,243.31 L261.12,244.17 L261.66,245.02 L262.19,245.88" fill="none" stroke="#7E2F8E" stroke-width="1.1"/><rect x="123" y="0.3" width="11.7" height="161.40" fill="#7ff7f7" stroke="#404040" stroke-width="1"/></g>
<path d="M0.00,269 v-2.6" stroke="#555555" stroke-width="0.8"/><path d="M64.75,269 v-2.6" stroke="#555555" stroke-width="0.8"/><path d="M129.50,269 v-2.6" stroke="#555555" stroke-width="0.8"/><path d="M194.25,269 v-2.6" stroke="#555555" stroke-width="0.8"/><path d="M259.00,269 v-2.6" stroke="#555555" stroke-width="0.8"/><path d="M0,0.00 h2.6" stroke="#555555" stroke-width="0.8"/><path d="M0,53.80 h2.6" stroke="#555555" stroke-width="0.8"/><path d="M0,107.60 h2.6" stroke="#555555" stroke-width="0.8"/><path d="M0,161.40 h2.6" stroke="#555555" stroke-width="0.8"/><path d="M0,215.20 h2.6" stroke="#555555" stroke-width="0.8"/><path d="M0,269.00 h2.6" stroke="#555555" stroke-width="0.8"/>
<path d="M0.5,0 V269 M0,268.5 H259" fill="none" stroke="#555555" stroke-width="1" shape-rendering="crispEdges"/>
<rect x="143.5" y="11.5" width="107" height="69" fill="#fff" stroke="#3c3c3c" stroke-width="1.1"/><path d="M147.3,20.20 H187.5" stroke="#0072BD" stroke-width="1.1"/><path d="M147.3,36.80 H187.5" stroke="#D95319" stroke-width="1.1"/><path d="M147.3,53.40 H187.5" stroke="#EDB120" stroke-width="1.1"/><path d="M147.3,70.00 H187.5" stroke="#7E2F8E" stroke-width="1.1"/></svg>
<div class="t" style="position:absolute;left:484.90px;top:473.14px;font-size:12px;line-height:12px;color:#333333;font-weight:400;white-space:nowrap;">auto</div>
<div class="t" style="position:absolute;left:512.6px;top:473.14px;font-size:12px;line-height:12px;color:#262626;white-space:nowrap">3:S<span style="font-size:9px;position:relative;top:3px">11</span></div>
<div class="t" style="position:absolute;left:484.90px;top:489.74px;font-size:12px;line-height:12px;color:#333333;font-weight:400;white-space:nowrap;">auto</div>
<div class="t" style="position:absolute;left:512.6px;top:489.74px;font-size:12px;line-height:12px;color:#262626;white-space:nowrap">3:S<span style="font-size:9px;position:relative;top:3px">21</span></div>
<div class="t" style="position:absolute;left:484.90px;top:506.34px;font-size:12px;line-height:12px;color:#333333;font-weight:400;white-space:nowrap;">auto</div>
<div class="t" style="position:absolute;left:512.6px;top:506.34px;font-size:12px;line-height:12px;color:#262626;white-space:nowrap">1:S<span style="font-size:9px;position:relative;top:3px">11</span></div>
<div class="t" style="position:absolute;left:484.90px;top:522.94px;font-size:12px;line-height:12px;color:#333333;font-weight:400;white-space:nowrap;">auto</div>
<div class="t" style="position:absolute;left:512.6px;top:522.94px;font-size:12px;line-height:12px;color:#262626;white-space:nowrap">1:S<span style="font-size:9px;position:relative;top:3px">21</span></div>
<div class="t" style="position:absolute;right:911.20px;top:454.24px;font-size:12px;line-height:12px;color:#333333;font-weight:400;white-space:nowrap;">0</div>
<div class="t" style="position:absolute;right:911.20px;top:508.04px;font-size:12px;line-height:12px;color:#333333;font-weight:400;white-space:nowrap;">-5</div>
<div class="t" style="position:absolute;right:911.20px;top:561.84px;font-size:12px;line-height:12px;color:#333333;font-weight:400;white-space:nowrap;">-10</div>
<div class="t" style="position:absolute;right:911.20px;top:615.64px;font-size:12px;line-height:12px;color:#333333;font-weight:400;white-space:nowrap;">-15</div>
<div class="t" style="position:absolute;right:911.20px;top:669.44px;font-size:12px;line-height:12px;color:#333333;font-weight:400;white-space:nowrap;">-20</div>
<div class="t" style="position:absolute;right:911.20px;top:723.24px;font-size:12px;line-height:12px;color:#333333;font-weight:400;white-space:nowrap;">-25</div>
<div class="t" style="position:absolute;left:293.00px;top:734.84px;font-size:12px;line-height:12px;color:#333333;font-weight:400;white-space:nowrap;transform:translateX(-50%);">0.5</div>
<div class="t" style="position:absolute;left:357.75px;top:734.84px;font-size:12px;line-height:12px;color:#333333;font-weight:400;white-space:nowrap;transform:translateX(-50%);">1</div>
<div class="t" style="position:absolute;left:422.50px;top:734.84px;font-size:12px;line-height:12px;color:#333333;font-weight:400;white-space:nowrap;transform:translateX(-50%);">1.5</div>
<div class="t" style="position:absolute;left:487.25px;top:734.84px;font-size:12px;line-height:12px;color:#333333;font-weight:400;white-space:nowrap;transform:translateX(-50%);">2</div>
<div class="t" style="position:absolute;left:552.00px;top:734.84px;font-size:12px;line-height:12px;color:#333333;font-weight:400;white-space:nowrap;transform:translateX(-50%);">2.5</div>
<div class="t" style="position:absolute;left:422.50px;top:750.00px;font-size:13px;line-height:13px;color:#333333;font-weight:400;white-space:nowrap;transform:translateX(-50%);">Frequency (GHz)</div>
<div class="t" style="position:absolute;left:261px;top:593.4px;font-size:13px;line-height:13px;color:#333333;white-space:nowrap;transform:translate(-50%,-50%) rotate(-90deg) scaleX(1.03)">Magnitude (dB)</div>
<div style="position:absolute;left:571px;top:451px;width:234px;height:314px;border:1px solid #a8a8a8;box-sizing:border-box;box-shadow:inset 1px 1px 0 #fff,inset -1px -1px 0 #fff"></div>
<div style="position:absolute;left:572px;top:471px;width:232px;height:1px;background:#a8a8a8"></div>
<div class="t" style="position:absolute;left:575.50px;top:455.54px;font-size:12px;line-height:12px;color:#333333;font-weight:400;white-space:nowrap;">Plot Options</div>
<div class="t" style="position:absolute;left:582.50px;top:484.44px;font-size:12px;line-height:12px;color:#333333;font-weight:400;white-space:nowrap;">Parameters</div>
<svg style="position:absolute;left:612px;top:511px;overflow:visible;" width="15" height="15" viewBox="0 0 15 15"><rect x="0.5" y="0.5" width="13.5" height="13.5" fill="#fff" stroke="#7a7a7a" stroke-width="1"/><path d="M2.8,7.2 L5.6,10.3 L11.6,3.2" fill="none" stroke="#111" stroke-width="1.4"/></svg>
<div class="t" style="position:absolute;left:629.30px;top:511.14px;font-size:12px;line-height:12px;color:#333333;font-weight:400;white-space:nowrap;">S11</div>
<svg style="position:absolute;left:663px;top:511px;overflow:visible;" width="15" height="15" viewBox="0 0 15 15"><rect x="0.5" y="0.5" width="13.5" height="13.5" fill="#fff" stroke="#7a7a7a" stroke-width="1"/></svg>
<div class="t" style="position:absolute;left:680.50px;top:511.14px;font-size:12px;line-height:12px;color:#333333;font-weight:400;white-space:nowrap;">S12</div>
<svg style="position:absolute;left:612px;top:537px;overflow:visible;" width="15" height="15" viewBox="0 0 15 15"><rect x="0.5" y="0.5" width="13.5" height="13.5" fill="#fff" stroke="#7a7a7a" stroke-width="1"/><path d="M2.8,7.2 L5.6,10.3 L11.6,3.2" fill="none" stroke="#111" stroke-width="1.4"/></svg>
<div class="t" style="position:absolute;left:629.30px;top:537.84px;font-size:12px;line-height:12px;color:#333333;font-weight:400;white-space:nowrap;">S21</div>
<svg style="position:absolute;left:663px;top:537px;overflow:visible;" width="15" height="15" viewBox="0 0 15 15"><rect x="0.5" y="0.5" width="13.5" height="13.5" fill="#fff" stroke="#7a7a7a" stroke-width="1"/></svg>
<div class="t" style="position:absolute;left:680.50px;top:537.84px;font-size:12px;line-height:12px;color:#333333;font-weight:400;white-space:nowrap;">S22</div>
<div class="t" style="position:absolute;left:585.10px;top:566.34px;font-size:12px;line-height:12px;color:#333333;font-weight:400;white-space:nowrap;">Format</div>
<div style="position:absolute;left:582px;top:583px;width:212px;height:1px;background:#a8a8a8"></div>
<svg style="position:absolute;left:590.2px;top:585.5px;overflow:visible;" width="16" height="16" viewBox="0 0 16 16"><circle cx="8" cy="8" r="7.2" fill="#fff" stroke="#7a7a7a" stroke-width="1"/><circle cx="8" cy="8" r="3.6" fill="#111"/></svg>
<div class="t" style="position:absolute;left:608.60px;top:587.24px;font-size:12px;line-height:12px;color:#333333;font-weight:400;white-space:nowrap;">Magnitude/Phase</div>
<svg style="position:absolute;left:595px;top:606px;overflow:visible;" width="15" height="15" viewBox="0 0 15 15"><rect x="0.5" y="0.5" width="13.5" height="13.5" fill="#fff" stroke="#7a7a7a" stroke-width="1"/><path d="M2.8,7.2 L5.6,10.3 L11.6,3.2" fill="none" stroke="#111" stroke-width="1.4"/></svg>
<div class="t" style="position:absolute;left:612.90px;top:607.54px;font-size:12px;line-height:12px;color:#333333;font-weight:400;white-space:nowrap;">Magnitude</div>
<div style="position:absolute;left:678px;top:604px;width:61px;height:20px;background:#f4f4f4;border:1px solid #9a9a9a;border-radius:5px;box-sizing:border-box"></div>
<div class="t" style="position:absolute;left:683.70px;top:607.54px;font-size:12px;line-height:12px;color:#333333;font-weight:400;white-space:nowrap;">dB</div>
<svg style="position:absolute;left:723px;top:610px;overflow:visible;" width="9" height="8" viewBox="0 0 9 8"><polygon points="0,0 8.5,0 4.25,7" fill="#444"/></svg>
<svg style="position:absolute;left:595px;top:626px;overflow:visible;" width="15" height="15" viewBox="0 0 15 15"><rect x="0.5" y="0.5" width="13.5" height="13.5" fill="#fff" stroke="#7a7a7a" stroke-width="1"/></svg>
<div class="t" style="position:absolute;left:612.90px;top:627.54px;font-size:12px;line-height:12px;color:#333333;font-weight:400;white-space:nowrap;">Phase</div>
<svg style="position:absolute;left:590.2px;top:666.1px;overflow:visible;" width="16" height="16" viewBox="0 0 16 16"><circle cx="8" cy="8" r="7.2" fill="#fff" stroke="#7a7a7a" stroke-width="1"/></svg>
<div class="t" style="position:absolute;left:608.60px;top:667.84px;font-size:12px;line-height:12px;color:#333333;font-weight:400;white-space:nowrap;">Real/Imaginary</div>
<svg style="position:absolute;left:595px;top:687px;overflow:visible;" width="15" height="15" viewBox="0 0 15 15"><rect x="0.5" y="0.5" width="13.5" height="13.5" fill="#f4f4f4" stroke="#c4c4c4" stroke-width="1"/><path d="M2.8,7.2 L5.6,10.3 L11.6,3.2" fill="none" stroke="#b8b8b8" stroke-width="1.4"/></svg>
<div class="t" style="position:absolute;left:612.90px;top:688.04px;font-size:12px;line-height:12px;color:#b4b4b4;font-weight:400;white-space:nowrap;">Real Component</div>
<svg style="position:absolute;left:595px;top:707px;overflow:visible;" width="15" height="15" viewBox="0 0 15 15"><rect x="0.5" y="0.5" width="13.5" height="13.5" fill="#f4f4f4" stroke="#c4c4c4" stroke-width="1"/><path d="M2.8,7.2 L5.6,10.3 L11.6,3.2" fill="none" stroke="#b8b8b8" stroke-width="1.4"/></svg>
<div class="t" style="position:absolute;left:612.90px;top:708.04px;font-size:12px;line-height:12px;color:#b4b4b4;font-weight:400;white-space:nowrap;">Imaginary Component</div>
<div style="position:absolute;left:777px;top:584px;width:17px;height:170px;background:#efefef"></div>
<div style="position:absolute;left:779px;top:601px;width:13px;height:110px;background:#c2c2c2"></div>
<svg style="position:absolute;left:781px;top:589px;overflow:visible;" width="9" height="6" viewBox="0 0 9 6"><polygon points="0,5.5 8.5,5.5 4.25,0" fill="#9a9a9a"/></svg>
<svg style="position:absolute;left:781px;top:741px;overflow:visible;" width="9" height="6" viewBox="0 0 9 6"><polygon points="0,0 8.5,0 4.25,5.5" fill="#333"/></svg>
<div style="position:absolute;left:817px;top:418px;width:383px;height:356px;background:#f4f4f4"></div>
<div style="position:absolute;left:817px;top:418px;width:383px;height:23px;background:#ffffff"></div>
<div style="position:absolute;left:817px;top:440px;width:9px;height:1px;background:#d4d4d4"></div>
<div style="position:absolute;left:917px;top:440px;width:283px;height:1px;background:#d4d4d4"></div>
<div style="position:absolute;left:817px;top:418px;width:9px;height:22px;background:#ffffff;border-right:1px solid #d4d4d4;border-bottom:1px solid #cfcfcf;box-sizing:border-box"></div>
<svg style="position:absolute;left:820px;top:426px;overflow:visible;" width="6" height="9" viewBox="0 0 6 9"><path d="M0,0.5 H4 M0,2.5 H4 M0,4.5 H4 M0,6.5 H4" stroke="#9a9a9a" stroke-width="1" shape-rendering="crispEdges"/></svg>
<div style="position:absolute;left:826px;top:418px;width:91px;height:2px;background:#8f8f8f"></div>
<div style="position:absolute;left:917px;top:420px;width:1px;height:20px;background:#d8d8d8"></div>
<div class="t" style="position:absolute;left:834.70px;top:425.04px;font-size:12px;line-height:12px;color:#555555;font-weight:400;white-space:nowrap;">ZTransform</div>
<svg style="position:absolute;left:902.3px;top:428.3px;overflow:visible;" width="9" height="9" viewBox="0 0 9 9"><path d="M0.5,0.5 L8,8 M8,0.5 L0.5,8" stroke="#555" stroke-width="1.2"/></svg>
<svg style="position:absolute;left:1177.4px;top:424.3px;overflow:visible;" width="4" height="12" viewBox="0 0 4 12"><circle cx="2" cy="1.3" r="1.1" fill="#444"/><circle cx="2" cy="5.4" r="1.1" fill="#444"/><circle cx="2" cy="9.5" r="1.1" fill="#444"/></svg>
<div style="position:absolute;left:826px;top:451px;width:364px;height:206px;border:1px solid #a8a8a8;box-sizing:border-box;box-shadow:inset 1px 1px 0 #fff,inset -1px -1px 0 #fff"></div>
<svg style="position:absolute;left:918.5px;top:463px;overflow:visible" width="180" height="180" viewBox="-90 -90 180 180"><defs><clipPath id="smclip"><circle cx="0" cy="0" r="73"/></clipPath></defs><circle cx="0" cy="0" r="73" fill="#ffffff" stroke="#8a8a8a" stroke-width="0.9"/><g clip-path="url(#smclip)"><path d="M-1.2,-59.8 L1.5,-59.3 L4.1,-58.6 L6.6,-57.9 L9.1,-57.0 L11.6,-56.0 L13.9,-54.9 L16.3,-53.8 L18.5,-52.5 L20.7,-51.2 L22.8,-49.8 L24.8,-48.3 L26.8,-46.7 L28.6,-45.1 L30.4,-43.4 L32.2,-41.7 L33.8,-39.9 L35.3,-38.0 L36.8,-36.1 L38.2,-34.1 L39.5,-32.1 L40.7,-30.1 L41.8,-28.0 L42.9,-25.9 L43.8,-23.7 L44.7,-21.6 L45.5,-19.4 L46.2,-17.1 L46.8,-14.9 L47.3,-12.6 L47.8,-10.3 L48.1,-8.1 L48.4,-5.8 L48.6,-3.5 L48.7,-1.2 L48.7,1.2 L48.6,3.5 L48.4,5.8 L48.1,8.1 L47.8,10.3 L47.3,12.6 L46.8,14.9 L46.2,17.1 L45.5,19.4 L44.7,21.6 L43.8,23.7 L42.9,25.9 L41.8,28.0 L40.7,30.1 L39.5,32.1 L38.2,34.1 L36.8,36.1 L35.3,38.0 L33.8,39.9 L32.2,41.7 L30.4,43.4 L28.6,45.1 L26.8,46.7 L24.8,48.3 L22.8,49.8 L20.7,51.2 L18.5,52.5 L16.3,53.8 L13.9,54.9 L11.6,56.0 L9.1,57.0 L6.6,57.9 L4.1,58.6 L1.5,59.3 L-1.2,59.8" fill="none" stroke="#c4c4c4" stroke-width="0.8" stroke-dasharray="3,2"/><path d="M67.4,28.1 L65.9,27.5 L64.5,26.9 L63.1,26.3 L61.7,25.8 L60.4,25.2 L59.0,24.7 L57.7,24.2 L56.4,23.7 L55.2,23.2 L53.9,22.8 L52.7,22.3 L51.5,21.9 L50.3,21.5 L49.2,21.0 L48.0,20.6 L46.9,20.2 L45.8,19.9 L44.7,19.5 L43.6,19.1 L42.5,18.8 L41.4,18.4 L40.4,18.1 L39.4,17.7 L38.3,17.4 L37.3,17.1 L36.3,16.8 L35.3,16.4 L34.4,16.1 L33.4,15.8 L32.4,15.6 L31.5,15.3 L30.5,15.0 L29.6,14.7 L28.7,14.4 L27.8,14.2 L26.8,13.9 L25.9,13.7 L25.0,13.4 L24.2,13.2 L23.3,12.9 L22.4,12.7 L21.5,12.5 L20.7,12.2 L19.8,12.0 L18.9,11.8 L18.1,11.6 L17.2,11.3 L16.4,11.1 L15.6,10.9 L14.7,10.7 L13.9,10.5 L13.1,10.3 L12.2,10.1 L11.4,9.9 L10.6,9.7 L9.8,9.5 L9.0,9.3 L8.2,9.1 L7.3,9.0 L6.5,8.8 L5.7,8.6 L4.9,8.4 L4.1,8.2 L3.3,8.1 L2.5,7.9 L1.7,7.7 L0.9,7.6 L0.1,7.4 L-0.7,7.2" fill="none" stroke="#c4c4c4" stroke-width="0.8" stroke-dasharray="3,2"/><path d="M67.4,-28.1 L65.9,-27.5 L64.5,-26.9 L63.1,-26.3 L61.7,-25.8 L60.4,-25.2 L59.0,-24.7 L57.7,-24.2 L56.4,-23.7 L55.2,-23.2 L53.9,-22.8 L52.7,-22.3 L51.5,-21.9 L50.3,-21.5 L49.2,-21.0 L48.0,-20.6 L46.9,-20.2 L45.8,-19.9 L44.7,-19.5 L43.6,-19.1 L42.5,-18.8 L41.4,-18.4 L40.4,-18.1 L39.4,-17.7 L38.3,-17.4 L37.3,-17.1 L36.3,-16.8 L35.3,-16.4 L34.4,-16.1 L33.4,-15.8 L32.4,-15.6 L31.5,-15.3 L30.5,-15.0 L29.6,-14.7 L28.7,-14.4 L27.8,-14.2 L26.8,-13.9 L25.9,-13.7 L25.0,-13.4 L24.2,-13.2 L23.3,-12.9 L22.4,-12.7 L21.5,-12.5 L20.7,-12.2 L19.8,-12.0 L18.9,-11.8 L18.1,-11.6 L17.2,-11.3 L16.4,-11.1 L15.6,-10.9 L14.7,-10.7 L13.9,-10.5 L13.1,-10.3 L12.2,-10.1 L11.4,-9.9 L10.6,-9.7 L9.8,-9.5 L9.0,-9.3 L8.2,-9.1 L7.3,-9.0 L6.5,-8.8 L5.7,-8.6 L4.9,-8.4 L4.1,-8.2 L3.3,-8.1 L2.5,-7.9 L1.7,-7.7 L0.9,-7.6 L0.1,-7.4 L-0.7,-7.2" fill="none" stroke="#c4c4c4" stroke-width="0.8" stroke-dasharray="3,2"/><path d="M-38.0,-46.7 L-34.4,-47.6 L-30.8,-48.2 L-27.3,-48.6 L-23.9,-48.7 L-20.6,-48.5 L-17.4,-48.2 L-14.3,-47.6 L-11.3,-46.9 L-8.4,-46.0 L-5.7,-45.0 L-3.1,-43.8 L-0.6,-42.5 L1.7,-41.1 L3.9,-39.6 L6.0,-38.1 L7.9,-36.4 L9.8,-34.7 L11.5,-33.0 L13.1,-31.2 L14.5,-29.3 L15.9,-27.4 L17.1,-25.5 L18.3,-23.5 L19.3,-21.6 L20.2,-19.6 L21.1,-17.5 L21.8,-15.5 L22.4,-13.5 L23.0,-11.4 L23.4,-9.3 L23.8,-7.3 L24.1,-5.2 L24.2,-3.1 L24.3,-1.0 L24.3,1.0 L24.2,3.1 L24.1,5.2 L23.8,7.3 L23.4,9.3 L23.0,11.4 L22.4,13.5 L21.8,15.5 L21.1,17.5 L20.2,19.6 L19.3,21.6 L18.3,23.5 L17.1,25.5 L15.9,27.4 L14.5,29.3 L13.1,31.2 L11.5,33.0 L9.8,34.7 L7.9,36.4 L6.0,38.1 L3.9,39.6 L1.7,41.1 L-0.6,42.5 L-3.1,43.8 L-5.7,45.0 L-8.4,46.0 L-11.3,46.9 L-14.3,47.6 L-17.4,48.2 L-20.6,48.5 L-23.9,48.7 L-27.3,48.6 L-30.8,48.2 L-34.4,47.6 L-38.0,46.7" fill="none" stroke="#c4c4c4" stroke-width="0.8" stroke-dasharray="3,2"/><path d="M43.8,58.4 L42.7,56.9 L41.6,55.5 L40.5,54.1 L39.4,52.8 L38.3,51.5 L37.2,50.3 L36.2,49.0 L35.1,47.9 L34.1,46.7 L33.0,45.6 L32.0,44.6 L31.0,43.5 L30.0,42.5 L29.0,41.5 L28.0,40.5 L27.0,39.6 L26.0,38.7 L25.0,37.8 L24.0,36.9 L23.1,36.0 L22.1,35.2 L21.1,34.4 L20.2,33.6 L19.2,32.8 L18.3,32.0 L17.3,31.3 L16.4,30.6 L15.4,29.8 L14.5,29.1 L13.6,28.4 L12.6,27.7 L11.7,27.1 L10.8,26.4 L9.8,25.8 L8.9,25.1 L8.0,24.5 L7.0,23.9 L6.1,23.3 L5.2,22.7 L4.2,22.1 L3.3,21.5 L2.3,20.9 L1.4,20.4 L0.5,19.8 L-0.5,19.3 L-1.4,18.7 L-2.4,18.2 L-3.4,17.7 L-4.3,17.1 L-5.3,16.6 L-6.3,16.1 L-7.3,15.6 L-8.3,15.1 L-9.3,14.6 L-10.3,14.1 L-11.3,13.7 L-12.4,13.2 L-13.4,12.7 L-14.4,12.3 L-15.5,11.8 L-16.6,11.3 L-17.7,10.9 L-18.8,10.5 L-19.9,10.0 L-21.0,9.6 L-22.1,9.1 L-23.3,8.7 L-24.5,8.3 L-25.6,7.9" fill="none" stroke="#c4c4c4" stroke-width="0.8" stroke-dasharray="3,2"/><path d="M43.8,-58.4 L42.7,-56.9 L41.6,-55.5 L40.5,-54.1 L39.4,-52.8 L38.3,-51.5 L37.2,-50.3 L36.2,-49.0 L35.1,-47.9 L34.1,-46.7 L33.0,-45.6 L32.0,-44.6 L31.0,-43.5 L30.0,-42.5 L29.0,-41.5 L28.0,-40.5 L27.0,-39.6 L26.0,-38.7 L25.0,-37.8 L24.0,-36.9 L23.1,-36.0 L22.1,-35.2 L21.1,-34.4 L20.2,-33.6 L19.2,-32.8 L18.3,-32.0 L17.3,-31.3 L16.4,-30.6 L15.4,-29.8 L14.5,-29.1 L13.6,-28.4 L12.6,-27.7 L11.7,-27.1 L10.8,-26.4 L9.8,-25.8 L8.9,-25.1 L8.0,-24.5 L7.0,-23.9 L6.1,-23.3 L5.2,-22.7 L4.2,-22.1 L3.3,-21.5 L2.3,-20.9 L1.4,-20.4 L0.5,-19.8 L-0.5,-19.3 L-1.4,-18.7 L-2.4,-18.2 L-3.4,-17.7 L-4.3,-17.1 L-5.3,-16.6 L-6.3,-16.1 L-7.3,-15.6 L-8.3,-15.1 L-9.3,-14.6 L-10.3,-14.1 L-11.3,-13.7 L-12.4,-13.2 L-13.4,-12.7 L-14.4,-12.3 L-15.5,-11.8 L-16.6,-11.3 L-17.7,-10.9 L-18.8,-10.5 L-19.9,-10.0 L-21.0,-9.6 L-22.1,-9.1 L-23.3,-8.7 L-24.5,-8.3 L-25.6,-7.9" fill="none" stroke="#c4c4c4" stroke-width="0.8" stroke-dasharray="3,2"/><path d="M-62.9,-25.2 L-59.2,-28.6 L-55.2,-31.4 L-51.0,-33.5 L-46.9,-35.0 L-42.9,-35.9 L-39.1,-36.4 L-35.4,-36.5 L-31.9,-36.2 L-28.7,-35.7 L-25.7,-34.9 L-23.0,-33.9 L-20.5,-32.8 L-18.2,-31.6 L-16.1,-30.3 L-14.2,-28.9 L-12.4,-27.5 L-10.9,-26.0 L-9.4,-24.5 L-8.2,-23.0 L-7.0,-21.5 L-6.0,-20.0 L-5.0,-18.5 L-4.2,-17.0 L-3.4,-15.5 L-2.8,-14.0 L-2.2,-12.5 L-1.7,-11.0 L-1.3,-9.5 L-0.9,-8.0 L-0.6,-6.6 L-0.4,-5.1 L-0.2,-3.6 L-0.1,-2.2 L-0.0,-0.7 L-0.0,0.7 L-0.1,2.2 L-0.2,3.6 L-0.4,5.1 L-0.6,6.6 L-0.9,8.0 L-1.3,9.5 L-1.7,11.0 L-2.2,12.5 L-2.8,14.0 L-3.4,15.5 L-4.2,17.0 L-5.0,18.5 L-6.0,20.0 L-7.0,21.5 L-8.2,23.0 L-9.4,24.5 L-10.9,26.0 L-12.4,27.5 L-14.2,28.9 L-16.1,30.3 L-18.2,31.6 L-20.5,32.8 L-23.0,33.9 L-25.7,34.9 L-28.7,35.7 L-31.9,36.2 L-35.4,36.5 L-39.1,36.4 L-42.9,35.9 L-46.9,35.0 L-51.0,33.5 L-55.2,31.4 L-59.2,28.6 L-62.9,25.2" fill="none" stroke="#c4c4c4" stroke-width="0.8" stroke-dasharray="3,2"/><path d="M-0.0,73.0 L-0.0,71.6 L-0.1,70.2 L-0.1,68.8 L-0.2,67.4 L-0.3,66.1 L-0.5,64.8 L-0.6,63.5 L-0.8,62.2 L-1.0,61.0 L-1.2,59.7 L-1.4,58.5 L-1.7,57.3 L-2.0,56.2 L-2.3,55.0 L-2.6,53.9 L-2.9,52.7 L-3.2,51.6 L-3.5,50.5 L-3.9,49.5 L-4.3,48.4 L-4.7,47.3 L-5.1,46.3 L-5.5,45.2 L-5.9,44.2 L-6.4,43.2 L-6.8,42.2 L-7.3,41.2 L-7.8,40.2 L-8.3,39.2 L-8.8,38.2 L-9.4,37.2 L-9.9,36.3 L-10.5,35.3 L-11.1,34.3 L-11.7,33.4 L-12.3,32.4 L-12.9,31.5 L-13.6,30.6 L-14.3,29.6 L-15.0,28.7 L-15.7,27.8 L-16.4,26.8 L-17.2,25.9 L-18.0,25.0 L-18.8,24.1 L-19.6,23.2 L-20.5,22.3 L-21.4,21.4 L-22.3,20.5 L-23.2,19.6 L-24.2,18.7 L-25.2,17.8 L-26.3,16.9 L-27.4,16.0 L-28.5,15.1 L-29.6,14.3 L-30.8,13.4 L-32.1,12.5 L-33.4,11.7 L-34.7,10.9 L-36.1,10.0 L-37.5,9.2 L-39.0,8.4 L-40.6,7.6 L-42.2,6.8 L-43.9,6.1 L-45.6,5.3 L-47.4,4.6 L-49.3,3.9" fill="none" stroke="#c4c4c4" stroke-width="0.8" stroke-dasharray="3,2"/><path d="M-0.0,-73.0 L-0.0,-71.6 L-0.1,-70.2 L-0.1,-68.8 L-0.2,-67.4 L-0.3,-66.1 L-0.5,-64.8 L-0.6,-63.5 L-0.8,-62.2 L-1.0,-61.0 L-1.2,-59.7 L-1.4,-58.5 L-1.7,-57.3 L-2.0,-56.2 L-2.3,-55.0 L-2.6,-53.9 L-2.9,-52.7 L-3.2,-51.6 L-3.5,-50.5 L-3.9,-49.5 L-4.3,-48.4 L-4.7,-47.3 L-5.1,-46.3 L-5.5,-45.2 L-5.9,-44.2 L-6.4,-43.2 L-6.8,-42.2 L-7.3,-41.2 L-7.8,-40.2 L-8.3,-39.2 L-8.8,-38.2 L-9.4,-37.2 L-9.9,-36.3 L-10.5,-35.3 L-11.1,-34.3 L-11.7,-33.4 L-12.3,-32.4 L-12.9,-31.5 L-13.6,-30.6 L-14.3,-29.6 L-15.0,-28.7 L-15.7,-27.8 L-16.4,-26.8 L-17.2,-25.9 L-18.0,-25.0 L-18.8,-24.1 L-19.6,-23.2 L-20.5,-22.3 L-21.4,-21.4 L-22.3,-20.5 L-23.2,-19.6 L-24.2,-18.7 L-25.2,-17.8 L-26.3,-16.9 L-27.4,-16.0 L-28.5,-15.1 L-29.6,-14.3 L-30.8,-13.4 L-32.1,-12.5 L-33.4,-11.7 L-34.7,-10.9 L-36.1,-10.0 L-37.5,-9.2 L-39.0,-8.4 L-40.6,-7.6 L-42.2,-6.8 L-43.9,-6.1 L-45.6,-5.3 L-47.4,-4.6 L-49.3,-3.9" fill="none" stroke="#c4c4c4" stroke-width="0.8" stroke-dasharray="3,2"/><path d="M-60.1,-21.5 L-56.2,-23.1 L-52.5,-24.0 L-49.1,-24.3 L-46.0,-24.2 L-43.2,-23.7 L-40.8,-23.0 L-38.7,-22.2 L-36.8,-21.3 L-35.2,-20.3 L-33.8,-19.3 L-32.6,-18.3 L-31.5,-17.3 L-30.6,-16.3 L-29.8,-15.3 L-29.0,-14.4 L-28.4,-13.5 L-27.8,-12.6 L-27.3,-11.7 L-26.9,-10.9 L-26.5,-10.1 L-26.2,-9.3 L-25.9,-8.5 L-25.6,-7.8 L-25.4,-7.1 L-25.2,-6.3 L-25.0,-5.6 L-24.8,-4.9 L-24.7,-4.3 L-24.6,-3.6 L-24.5,-2.9 L-24.4,-2.3 L-24.4,-1.6 L-24.4,-1.0 L-24.3,-0.3 L-24.3,0.3 L-24.4,1.0 L-24.4,1.6 L-24.4,2.3 L-24.5,2.9 L-24.6,3.6 L-24.7,4.3 L-24.8,4.9 L-25.0,5.6 L-25.2,6.3 L-25.4,7.1 L-25.6,7.8 L-25.9,8.5 L-26.2,9.3 L-26.5,10.1 L-26.9,10.9 L-27.3,11.7 L-27.8,12.6 L-28.4,13.5 L-29.0,14.4 L-29.8,15.3 L-30.6,16.3 L-31.5,17.3 L-32.6,18.3 L-33.8,19.3 L-35.2,20.3 L-36.8,21.3 L-38.7,22.2 L-40.8,23.0 L-43.2,23.7 L-46.0,24.2 L-49.1,24.3 L-52.5,24.0 L-56.2,23.1 L-60.1,21.5" fill="none" stroke="#c4c4c4" stroke-width="0.8" stroke-dasharray="3,2"/><path d="M-43.8,58.4 L-43.5,57.9 L-43.1,57.5 L-42.8,57.0 L-42.5,56.5 L-42.2,56.0 L-41.9,55.6 L-41.6,55.1 L-41.3,54.6 L-41.0,54.1 L-40.8,53.6 L-40.5,53.1 L-40.3,52.6 L-40.0,52.1 L-39.8,51.6 L-39.6,51.1 L-39.3,50.6 L-39.1,50.1 L-38.9,49.6 L-38.7,49.1 L-38.5,48.5 L-38.4,48.0 L-38.2,47.4 L-38.0,46.9 L-37.8,46.3 L-37.7,45.8 L-37.5,45.2 L-37.4,44.6 L-37.3,44.0 L-37.2,43.4 L-37.0,42.8 L-36.9,42.2 L-36.9,41.6 L-36.8,40.9 L-36.7,40.3 L-36.6,39.6 L-36.6,38.9 L-36.5,38.2 L-36.5,37.5 L-36.5,36.8 L-36.5,36.1 L-36.5,35.4 L-36.5,34.6 L-36.6,33.8 L-36.7,33.0 L-36.7,32.2 L-36.9,31.4 L-37.0,30.6 L-37.1,29.7 L-37.3,28.8 L-37.5,27.9 L-37.8,27.0 L-38.0,26.1 L-38.3,25.1 L-38.7,24.1 L-39.0,23.1 L-39.5,22.1 L-39.9,21.0 L-40.5,19.9 L-41.0,18.9 L-41.7,17.7 L-42.4,16.6 L-43.2,15.5 L-44.0,14.3 L-45.0,13.1 L-46.0,12.0 L-47.1,10.8 L-48.3,9.6 L-49.7,8.4 L-51.1,7.3" fill="none" stroke="#c4c4c4" stroke-width="0.8" stroke-dasharray="3,2"/><path d="M-43.8,-58.4 L-43.5,-57.9 L-43.1,-57.5 L-42.8,-57.0 L-42.5,-56.5 L-42.2,-56.0 L-41.9,-55.6 L-41.6,-55.1 L-41.3,-54.6 L-41.0,-54.1 L-40.8,-53.6 L-40.5,-53.1 L-40.3,-52.6 L-40.0,-52.1 L-39.8,-51.6 L-39.6,-51.1 L-39.3,-50.6 L-39.1,-50.1 L-38.9,-49.6 L-38.7,-49.1 L-38.5,-48.5 L-38.4,-48.0 L-38.2,-47.4 L-38.0,-46.9 L-37.8,-46.3 L-37.7,-45.8 L-37.5,-45.2 L-37.4,-44.6 L-37.3,-44.0 L-37.2,-43.4 L-37.0,-42.8 L-36.9,-42.2 L-36.9,-41.6 L-36.8,-40.9 L-36.7,-40.3 L-36.6,-39.6 L-36.6,-38.9 L-36.5,-38.2 L-36.5,-37.5 L-36.5,-36.8 L-36.5,-36.1 L-36.5,-35.4 L-36.5,-34.6 L-36.6,-33.8 L-36.7,-33.0 L-36.7,-32.2 L-36.9,-31.4 L-37.0,-30.6 L-37.1,-29.7 L-37.3,-28.8 L-37.5,-27.9 L-37.8,-27.0 L-38.0,-26.1 L-38.3,-25.1 L-38.7,-24.1 L-39.0,-23.1 L-39.5,-22.1 L-39.9,-21.0 L-40.5,-19.9 L-41.0,-18.9 L-41.7,-17.7 L-42.4,-16.6 L-43.2,-15.5 L-44.0,-14.3 L-45.0,-13.1 L-46.0,-12.0 L-47.1,-10.8 L-48.3,-9.6 L-49.7,-8.4 L-51.1,-7.3" fill="none" stroke="#c4c4c4" stroke-width="0.8" stroke-dasharray="3,2"/><path d="M-72.1,-4.7 L-68.6,-9.3 L-64.4,-11.6 L-60.7,-12.2 L-57.8,-11.8 L-55.7,-11.0 L-54.1,-10.1 L-53.0,-9.3 L-52.1,-8.5 L-51.4,-7.7 L-50.9,-7.1 L-50.5,-6.5 L-50.2,-5.9 L-50.0,-5.5 L-49.8,-5.0 L-49.6,-4.6 L-49.4,-4.2 L-49.3,-3.9 L-49.2,-3.6 L-49.1,-3.3 L-49.0,-3.0 L-49.0,-2.7 L-48.9,-2.5 L-48.9,-2.3 L-48.8,-2.0 L-48.8,-1.8 L-48.8,-1.6 L-48.7,-1.4 L-48.7,-1.2 L-48.7,-1.0 L-48.7,-0.8 L-48.7,-0.6 L-48.7,-0.5 L-48.7,-0.3 L-48.7,-0.1 L-48.7,0.1 L-48.7,0.3 L-48.7,0.5 L-48.7,0.6 L-48.7,0.8 L-48.7,1.0 L-48.7,1.2 L-48.7,1.4 L-48.8,1.6 L-48.8,1.8 L-48.8,2.0 L-48.9,2.3 L-48.9,2.5 L-49.0,2.7 L-49.0,3.0 L-49.1,3.3 L-49.2,3.6 L-49.3,3.9 L-49.4,4.2 L-49.6,4.6 L-49.8,5.0 L-50.0,5.5 L-50.2,5.9 L-50.5,6.5 L-50.9,7.1 L-51.4,7.7 L-52.1,8.5 L-53.0,9.3 L-54.1,10.1 L-55.7,11.0 L-57.8,11.8 L-60.7,12.2 L-64.4,11.6 L-68.6,9.3 L-72.1,4.7" fill="none" stroke="#c4c4c4" stroke-width="0.8" stroke-dasharray="3,2"/><path d="M-67.4,28.1 L-67.3,28.0 L-67.2,28.0 L-67.0,27.9 L-66.9,27.9 L-66.8,27.8 L-66.7,27.8 L-66.6,27.7 L-66.5,27.7 L-66.4,27.6 L-66.2,27.5 L-66.1,27.5 L-66.0,27.4 L-65.9,27.4 L-65.8,27.3 L-65.7,27.2 L-65.5,27.2 L-65.4,27.1 L-65.3,27.0 L-65.2,26.9 L-65.1,26.9 L-64.9,26.8 L-64.8,26.7 L-64.7,26.6 L-64.6,26.5 L-64.4,26.4 L-64.3,26.3 L-64.2,26.2 L-64.0,26.1 L-63.9,26.0 L-63.7,25.9 L-63.6,25.8 L-63.4,25.6 L-63.3,25.5 L-63.1,25.4 L-63.0,25.2 L-62.8,25.1 L-62.6,24.9 L-62.5,24.7 L-62.3,24.5 L-62.1,24.3 L-61.9,24.1 L-61.7,23.9 L-61.5,23.6 L-61.3,23.4 L-61.1,23.1 L-60.9,22.8 L-60.7,22.5 L-60.5,22.1 L-60.3,21.8 L-60.0,21.3 L-59.8,20.9 L-59.6,20.4 L-59.4,19.8 L-59.2,19.2 L-59.0,18.6 L-58.8,17.8 L-58.6,17.0 L-58.5,16.1 L-58.4,15.1 L-58.4,14.0 L-58.5,12.8 L-58.7,11.5 L-59.1,10.0 L-59.8,8.4 L-60.7,6.7 L-62.0,5.0 L-63.7,3.4 L-65.8,1.9 L-68.4,0.7" fill="none" stroke="#c4c4c4" stroke-width="0.8" stroke-dasharray="3,2"/><path d="M-67.4,-28.1 L-67.3,-28.0 L-67.2,-28.0 L-67.0,-27.9 L-66.9,-27.9 L-66.8,-27.8 L-66.7,-27.8 L-66.6,-27.7 L-66.5,-27.7 L-66.4,-27.6 L-66.2,-27.5 L-66.1,-27.5 L-66.0,-27.4 L-65.9,-27.4 L-65.8,-27.3 L-65.7,-27.2 L-65.5,-27.2 L-65.4,-27.1 L-65.3,-27.0 L-65.2,-26.9 L-65.1,-26.9 L-64.9,-26.8 L-64.8,-26.7 L-64.7,-26.6 L-64.6,-26.5 L-64.4,-26.4 L-64.3,-26.3 L-64.2,-26.2 L-64.0,-26.1 L-63.9,-26.0 L-63.7,-25.9 L-63.6,-25.8 L-63.4,-25.6 L-63.3,-25.5 L-63.1,-25.4 L-63.0,-25.2 L-62.8,-25.1 L-62.6,-24.9 L-62.5,-24.7 L-62.3,-24.5 L-62.1,-24.3 L-61.9,-24.1 L-61.7,-23.9 L-61.5,-23.6 L-61.3,-23.4 L-61.1,-23.1 L-60.9,-22.8 L-60.7,-22.5 L-60.5,-22.1 L-60.3,-21.8 L-60.0,-21.3 L-59.8,-20.9 L-59.6,-20.4 L-59.4,-19.8 L-59.2,-19.2 L-59.0,-18.6 L-58.8,-17.8 L-58.6,-17.0 L-58.5,-16.1 L-58.4,-15.1 L-58.4,-14.0 L-58.5,-12.8 L-58.7,-11.5 L-59.1,-10.0 L-59.8,-8.4 L-60.7,-6.7 L-62.0,-5.0 L-63.7,-3.4 L-65.8,-1.9 L-68.4,-0.7" fill="none" stroke="#c4c4c4" stroke-width="0.8" stroke-dasharray="3,2"/><path d="M1.2,59.8 L-1.5,59.3 L-4.1,58.6 L-6.6,57.9 L-9.1,57.0 L-11.6,56.0 L-13.9,54.9 L-16.3,53.8 L-18.5,52.5 L-20.7,51.2 L-22.8,49.8 L-24.8,48.3 L-26.8,46.7 L-28.6,45.1 L-30.4,43.4 L-32.2,41.7 L-33.8,39.9 L-35.3,38.0 L-36.8,36.1 L-38.2,34.1 L-39.5,32.1 L-40.7,30.1 L-41.8,28.0 L-42.9,25.9 L-43.8,23.7 L-44.7,21.6 L-45.5,19.4 L-46.2,17.1 L-46.8,14.9 L-47.3,12.6 L-47.8,10.3 L-48.1,8.1 L-48.4,5.8 L-48.6,3.5 L-48.7,1.2 L-48.7,-1.2 L-48.6,-3.5 L-48.4,-5.8 L-48.1,-8.1 L-47.8,-10.3 L-47.3,-12.6 L-46.8,-14.9 L-46.2,-17.1 L-45.5,-19.4 L-44.7,-21.6 L-43.8,-23.7 L-42.9,-25.9 L-41.8,-28.0 L-40.7,-30.1 L-39.5,-32.1 L-38.2,-34.1 L-36.8,-36.1 L-35.3,-38.0 L-33.8,-39.9 L-32.2,-41.7 L-30.4,-43.4 L-28.6,-45.1 L-26.8,-46.7 L-24.8,-48.3 L-22.8,-49.8 L-20.7,-51.2 L-18.5,-52.5 L-16.3,-53.8 L-13.9,-54.9 L-11.6,-56.0 L-9.1,-57.0 L-6.6,-57.9 L-4.1,-58.6 L-1.5,-59.3 L1.2,-59.8" fill="none" stroke="#7c7c7c" stroke-width="0.75"/><path d="M-67.4,-28.1 L-65.9,-27.5 L-64.5,-26.9 L-63.1,-26.3 L-61.7,-25.8 L-60.4,-25.2 L-59.0,-24.7 L-57.7,-24.2 L-56.4,-23.7 L-55.2,-23.2 L-53.9,-22.8 L-52.7,-22.3 L-51.5,-21.9 L-50.3,-21.5 L-49.2,-21.0 L-48.0,-20.6 L-46.9,-20.2 L-45.8,-19.9 L-44.7,-19.5 L-43.6,-19.1 L-42.5,-18.8 L-41.4,-18.4 L-40.4,-18.1 L-39.4,-17.7 L-38.3,-17.4 L-37.3,-17.1 L-36.3,-16.8 L-35.3,-16.4 L-34.4,-16.1 L-33.4,-15.8 L-32.4,-15.6 L-31.5,-15.3 L-30.5,-15.0 L-29.6,-14.7 L-28.7,-14.4 L-27.8,-14.2 L-26.8,-13.9 L-25.9,-13.7 L-25.0,-13.4 L-24.2,-13.2 L-23.3,-12.9 L-22.4,-12.7 L-21.5,-12.5 L-20.7,-12.2 L-19.8,-12.0 L-18.9,-11.8 L-18.1,-11.6 L-17.2,-11.3 L-16.4,-11.1 L-15.6,-10.9 L-14.7,-10.7 L-13.9,-10.5 L-13.1,-10.3 L-12.2,-10.1 L-11.4,-9.9 L-10.6,-9.7 L-9.8,-9.5 L-9.0,-9.3 L-8.2,-9.1 L-7.3,-9.0 L-6.5,-8.8 L-5.7,-8.6 L-4.9,-8.4 L-4.1,-8.2 L-3.3,-8.1 L-2.5,-7.9 L-1.7,-7.7 L-0.9,-7.6 L-0.1,-7.4 L0.7,-7.2" fill="none" stroke="#7c7c7c" stroke-width="0.75"/><path d="M-67.4,28.1 L-65.9,27.5 L-64.5,26.9 L-63.1,26.3 L-61.7,25.8 L-60.4,25.2 L-59.0,24.7 L-57.7,24.2 L-56.4,23.7 L-55.2,23.2 L-53.9,22.8 L-52.7,22.3 L-51.5,21.9 L-50.3,21.5 L-49.2,21.0 L-48.0,20.6 L-46.9,20.2 L-45.8,19.9 L-44.7,19.5 L-43.6,19.1 L-42.5,18.8 L-41.4,18.4 L-40.4,18.1 L-39.4,17.7 L-38.3,17.4 L-37.3,17.1 L-36.3,16.8 L-35.3,16.4 L-34.4,16.1 L-33.4,15.8 L-32.4,15.6 L-31.5,15.3 L-30.5,15.0 L-29.6,14.7 L-28.7,14.4 L-27.8,14.2 L-26.8,13.9 L-25.9,13.7 L-25.0,13.4 L-24.2,13.2 L-23.3,12.9 L-22.4,12.7 L-21.5,12.5 L-20.7,12.2 L-19.8,12.0 L-18.9,11.8 L-18.1,11.6 L-17.2,11.3 L-16.4,11.1 L-15.6,10.9 L-14.7,10.7 L-13.9,10.5 L-13.1,10.3 L-12.2,10.1 L-11.4,9.9 L-10.6,9.7 L-9.8,9.5 L-9.0,9.3 L-8.2,9.1 L-7.3,9.0 L-6.5,8.8 L-5.7,8.6 L-4.9,8.4 L-4.1,8.2 L-3.3,8.1 L-2.5,7.9 L-1.7,7.7 L-0.9,7.6 L-0.1,7.4 L0.7,7.2" fill="none" stroke="#7c7c7c" stroke-width="0.75"/><path d="M38.0,46.7 L34.4,47.6 L30.8,48.2 L27.3,48.6 L23.9,48.7 L20.6,48.5 L17.4,48.2 L14.3,47.6 L11.3,46.9 L8.4,46.0 L5.7,45.0 L3.1,43.8 L0.6,42.5 L-1.7,41.1 L-3.9,39.6 L-6.0,38.1 L-7.9,36.4 L-9.8,34.7 L-11.5,33.0 L-13.1,31.2 L-14.5,29.3 L-15.9,27.4 L-17.1,25.5 L-18.3,23.5 L-19.3,21.6 L-20.2,19.6 L-21.1,17.5 L-21.8,15.5 L-22.4,13.5 L-23.0,11.4 L-23.4,9.3 L-23.8,7.3 L-24.1,5.2 L-24.2,3.1 L-24.3,1.0 L-24.3,-1.0 L-24.2,-3.1 L-24.1,-5.2 L-23.8,-7.3 L-23.4,-9.3 L-23.0,-11.4 L-22.4,-13.5 L-21.8,-15.5 L-21.1,-17.5 L-20.2,-19.6 L-19.3,-21.6 L-18.3,-23.5 L-17.1,-25.5 L-15.9,-27.4 L-14.5,-29.3 L-13.1,-31.2 L-11.5,-33.0 L-9.8,-34.7 L-7.9,-36.4 L-6.0,-38.1 L-3.9,-39.6 L-1.7,-41.1 L0.6,-42.5 L3.1,-43.8 L5.7,-45.0 L8.4,-46.0 L11.3,-46.9 L14.3,-47.6 L17.4,-48.2 L20.6,-48.5 L23.9,-48.7 L27.3,-48.6 L30.8,-48.2 L34.4,-47.6 L38.0,-46.7" fill="none" stroke="#7c7c7c" stroke-width="0.75"/><path d="M-43.8,-58.4 L-42.7,-56.9 L-41.6,-55.5 L-40.5,-54.1 L-39.4,-52.8 L-38.3,-51.5 L-37.2,-50.3 L-36.2,-49.0 L-35.1,-47.9 L-34.1,-46.7 L-33.0,-45.6 L-32.0,-44.6 L-31.0,-43.5 L-30.0,-42.5 L-29.0,-41.5 L-28.0,-40.5 L-27.0,-39.6 L-26.0,-38.7 L-25.0,-37.8 L-24.0,-36.9 L-23.1,-36.0 L-22.1,-35.2 L-21.1,-34.4 L-20.2,-33.6 L-19.2,-32.8 L-18.3,-32.0 L-17.3,-31.3 L-16.4,-30.6 L-15.4,-29.8 L-14.5,-29.1 L-13.6,-28.4 L-12.6,-27.7 L-11.7,-27.1 L-10.8,-26.4 L-9.8,-25.8 L-8.9,-25.1 L-8.0,-24.5 L-7.0,-23.9 L-6.1,-23.3 L-5.2,-22.7 L-4.2,-22.1 L-3.3,-21.5 L-2.3,-20.9 L-1.4,-20.4 L-0.5,-19.8 L0.5,-19.3 L1.4,-18.7 L2.4,-18.2 L3.4,-17.7 L4.3,-17.1 L5.3,-16.6 L6.3,-16.1 L7.3,-15.6 L8.3,-15.1 L9.3,-14.6 L10.3,-14.1 L11.3,-13.7 L12.4,-13.2 L13.4,-12.7 L14.4,-12.3 L15.5,-11.8 L16.6,-11.3 L17.7,-10.9 L18.8,-10.5 L19.9,-10.0 L21.0,-9.6 L22.1,-9.1 L23.3,-8.7 L24.5,-8.3 L25.6,-7.9" fill="none" stroke="#7c7c7c" stroke-width="0.75"/><path d="M-43.8,58.4 L-42.7,56.9 L-41.6,55.5 L-40.5,54.1 L-39.4,52.8 L-38.3,51.5 L-37.2,50.3 L-36.2,49.0 L-35.1,47.9 L-34.1,46.7 L-33.0,45.6 L-32.0,44.6 L-31.0,43.5 L-30.0,42.5 L-29.0,41.5 L-28.0,40.5 L-27.0,39.6 L-26.0,38.7 L-25.0,37.8 L-24.0,36.9 L-23.1,36.0 L-22.1,35.2 L-21.1,34.4 L-20.2,33.6 L-19.2,32.8 L-18.3,32.0 L-17.3,31.3 L-16.4,30.6 L-15.4,29.8 L-14.5,29.1 L-13.6,28.4 L-12.6,27.7 L-11.7,27.1 L-10.8,26.4 L-9.8,25.8 L-8.9,25.1 L-8.0,24.5 L-7.0,23.9 L-6.1,23.3 L-5.2,22.7 L-4.2,22.1 L-3.3,21.5 L-2.3,20.9 L-1.4,20.4 L-0.5,19.8 L0.5,19.3 L1.4,18.7 L2.4,18.2 L3.4,17.7 L4.3,17.1 L5.3,16.6 L6.3,16.1 L7.3,15.6 L8.3,15.1 L9.3,14.6 L10.3,14.1 L11.3,13.7 L12.4,13.2 L13.4,12.7 L14.4,12.3 L15.5,11.8 L16.6,11.3 L17.7,10.9 L18.8,10.5 L19.9,10.0 L21.0,9.6 L22.1,9.1 L23.3,8.7 L24.5,8.3 L25.6,7.9" fill="none" stroke="#7c7c7c" stroke-width="0.75"/><path d="M62.9,25.2 L59.2,28.6 L55.2,31.4 L51.0,33.5 L46.9,35.0 L42.9,35.9 L39.1,36.4 L35.4,36.5 L31.9,36.2 L28.7,35.7 L25.7,34.9 L23.0,33.9 L20.5,32.8 L18.2,31.6 L16.1,30.3 L14.2,28.9 L12.4,27.5 L10.9,26.0 L9.4,24.5 L8.2,23.0 L7.0,21.5 L6.0,20.0 L5.0,18.5 L4.2,17.0 L3.4,15.5 L2.8,14.0 L2.2,12.5 L1.7,11.0 L1.3,9.5 L0.9,8.0 L0.6,6.6 L0.4,5.1 L0.2,3.6 L0.1,2.2 L0.0,0.7 L0.0,-0.7 L0.1,-2.2 L0.2,-3.6 L0.4,-5.1 L0.6,-6.6 L0.9,-8.0 L1.3,-9.5 L1.7,-11.0 L2.2,-12.5 L2.8,-14.0 L3.4,-15.5 L4.2,-17.0 L5.0,-18.5 L6.0,-20.0 L7.0,-21.5 L8.2,-23.0 L9.4,-24.5 L10.9,-26.0 L12.4,-27.5 L14.2,-28.9 L16.1,-30.3 L18.2,-31.6 L20.5,-32.8 L23.0,-33.9 L25.7,-34.9 L28.7,-35.7 L31.9,-36.2 L35.4,-36.5 L39.1,-36.4 L42.9,-35.9 L46.9,-35.0 L51.0,-33.5 L55.2,-31.4 L59.2,-28.6 L62.9,-25.2" fill="none" stroke="#7c7c7c" stroke-width="0.75"/><path d="M0.0,-73.0 L0.0,-71.6 L0.1,-70.2 L0.1,-68.8 L0.2,-67.4 L0.3,-66.1 L0.5,-64.8 L0.6,-63.5 L0.8,-62.2 L1.0,-61.0 L1.2,-59.7 L1.4,-58.5 L1.7,-57.3 L2.0,-56.2 L2.3,-55.0 L2.6,-53.9 L2.9,-52.7 L3.2,-51.6 L3.5,-50.5 L3.9,-49.5 L4.3,-48.4 L4.7,-47.3 L5.1,-46.3 L5.5,-45.2 L5.9,-44.2 L6.4,-43.2 L6.8,-42.2 L7.3,-41.2 L7.8,-40.2 L8.3,-39.2 L8.8,-38.2 L9.4,-37.2 L9.9,-36.3 L10.5,-35.3 L11.1,-34.3 L11.7,-33.4 L12.3,-32.4 L12.9,-31.5 L13.6,-30.6 L14.3,-29.6 L15.0,-28.7 L15.7,-27.8 L16.4,-26.8 L17.2,-25.9 L18.0,-25.0 L18.8,-24.1 L19.6,-23.2 L20.5,-22.3 L21.4,-21.4 L22.3,-20.5 L23.2,-19.6 L24.2,-18.7 L25.2,-17.8 L26.3,-16.9 L27.4,-16.0 L28.5,-15.1 L29.6,-14.3 L30.8,-13.4 L32.1,-12.5 L33.4,-11.7 L34.7,-10.9 L36.1,-10.0 L37.5,-9.2 L39.0,-8.4 L40.6,-7.6 L42.2,-6.8 L43.9,-6.1 L45.6,-5.3 L47.4,-4.6 L49.3,-3.9" fill="none" stroke="#7c7c7c" stroke-width="0.75"/><path d="M0.0,73.0 L0.0,71.6 L0.1,70.2 L0.1,68.8 L0.2,67.4 L0.3,66.1 L0.5,64.8 L0.6,63.5 L0.8,62.2 L1.0,61.0 L1.2,59.7 L1.4,58.5 L1.7,57.3 L2.0,56.2 L2.3,55.0 L2.6,53.9 L2.9,52.7 L3.2,51.6 L3.5,50.5 L3.9,49.5 L4.3,48.4 L4.7,47.3 L5.1,46.3 L5.5,45.2 L5.9,44.2 L6.4,43.2 L6.8,42.2 L7.3,41.2 L7.8,40.2 L8.3,39.2 L8.8,38.2 L9.4,37.2 L9.9,36.3 L10.5,35.3 L11.1,34.3 L11.7,33.4 L12.3,32.4 L12.9,31.5 L13.6,30.6 L14.3,29.6 L15.0,28.7 L15.7,27.8 L16.4,26.8 L17.2,25.9 L18.0,25.0 L18.8,24.1 L19.6,23.2 L20.5,22.3 L21.4,21.4 L22.3,20.5 L23.2,19.6 L24.2,18.7 L25.2,17.8 L26.3,16.9 L27.4,16.0 L28.5,15.1 L29.6,14.3 L30.8,13.4 L32.1,12.5 L33.4,11.7 L34.7,10.9 L36.1,10.0 L37.5,9.2 L39.0,8.4 L40.6,7.6 L42.2,6.8 L43.9,6.1 L45.6,5.3 L47.4,4.6 L49.3,3.9" fill="none" stroke="#7c7c7c" stroke-width="0.75"/><path d="M60.1,21.5 L56.2,23.1 L52.5,24.0 L49.1,24.3 L46.0,24.2 L43.2,23.7 L40.8,23.0 L38.7,22.2 L36.8,21.3 L35.2,20.3 L33.8,19.3 L32.6,18.3 L31.5,17.3 L30.6,16.3 L29.8,15.3 L29.0,14.4 L28.4,13.5 L27.8,12.6 L27.3,11.7 L26.9,10.9 L26.5,10.1 L26.2,9.3 L25.9,8.5 L25.6,7.8 L25.4,7.1 L25.2,6.3 L25.0,5.6 L24.8,4.9 L24.7,4.3 L24.6,3.6 L24.5,2.9 L24.4,2.3 L24.4,1.6 L24.4,1.0 L24.3,0.3 L24.3,-0.3 L24.4,-1.0 L24.4,-1.6 L24.4,-2.3 L24.5,-2.9 L24.6,-3.6 L24.7,-4.3 L24.8,-4.9 L25.0,-5.6 L25.2,-6.3 L25.4,-7.1 L25.6,-7.8 L25.9,-8.5 L26.2,-9.3 L26.5,-10.1 L26.9,-10.9 L27.3,-11.7 L27.8,-12.6 L28.4,-13.5 L29.0,-14.4 L29.8,-15.3 L30.6,-16.3 L31.5,-17.3 L32.6,-18.3 L33.8,-19.3 L35.2,-20.3 L36.8,-21.3 L38.7,-22.2 L40.8,-23.0 L43.2,-23.7 L46.0,-24.2 L49.1,-24.3 L52.5,-24.0 L56.2,-23.1 L60.1,-21.5" fill="none" stroke="#7c7c7c" stroke-width="0.75"/><path d="M43.8,-58.4 L43.5,-57.9 L43.1,-57.5 L42.8,-57.0 L42.5,-56.5 L42.2,-56.0 L41.9,-55.6 L41.6,-55.1 L41.3,-54.6 L41.0,-54.1 L40.8,-53.6 L40.5,-53.1 L40.3,-52.6 L40.0,-52.1 L39.8,-51.6 L39.6,-51.1 L39.3,-50.6 L39.1,-50.1 L38.9,-49.6 L38.7,-49.1 L38.5,-48.5 L38.4,-48.0 L38.2,-47.4 L38.0,-46.9 L37.8,-46.3 L37.7,-45.8 L37.5,-45.2 L37.4,-44.6 L37.3,-44.0 L37.2,-43.4 L37.0,-42.8 L36.9,-42.2 L36.9,-41.6 L36.8,-40.9 L36.7,-40.3 L36.6,-39.6 L36.6,-38.9 L36.5,-38.2 L36.5,-37.5 L36.5,-36.8 L36.5,-36.1 L36.5,-35.4 L36.5,-34.6 L36.6,-33.8 L36.7,-33.0 L36.7,-32.2 L36.9,-31.4 L37.0,-30.6 L37.1,-29.7 L37.3,-28.8 L37.5,-27.9 L37.8,-27.0 L38.0,-26.1 L38.3,-25.1 L38.7,-24.1 L39.0,-23.1 L39.5,-22.1 L39.9,-21.0 L40.5,-19.9 L41.0,-18.9 L41.7,-17.7 L42.4,-16.6 L43.2,-15.5 L44.0,-14.3 L45.0,-13.1 L46.0,-12.0 L47.1,-10.8 L48.3,-9.6 L49.7,-8.4 L51.1,-7.3" fill="none" stroke="#7c7c7c" stroke-width="0.75"/><path d="M43.8,58.4 L43.5,57.9 L43.1,57.5 L42.8,57.0 L42.5,56.5 L42.2,56.0 L41.9,55.6 L41.6,55.1 L41.3,54.6 L41.0,54.1 L40.8,53.6 L40.5,53.1 L40.3,52.6 L40.0,52.1 L39.8,51.6 L39.6,51.1 L39.3,50.6 L39.1,50.1 L38.9,49.6 L38.7,49.1 L38.5,48.5 L38.4,48.0 L38.2,47.4 L38.0,46.9 L37.8,46.3 L37.7,45.8 L37.5,45.2 L37.4,44.6 L37.3,44.0 L37.2,43.4 L37.0,42.8 L36.9,42.2 L36.9,41.6 L36.8,40.9 L36.7,40.3 L36.6,39.6 L36.6,38.9 L36.5,38.2 L36.5,37.5 L36.5,36.8 L36.5,36.1 L36.5,35.4 L36.5,34.6 L36.6,33.8 L36.7,33.0 L36.7,32.2 L36.9,31.4 L37.0,30.6 L37.1,29.7 L37.3,28.8 L37.5,27.9 L37.8,27.0 L38.0,26.1 L38.3,25.1 L38.7,24.1 L39.0,23.1 L39.5,22.1 L39.9,21.0 L40.5,19.9 L41.0,18.9 L41.7,17.7 L42.4,16.6 L43.2,15.5 L44.0,14.3 L45.0,13.1 L46.0,12.0 L47.1,10.8 L48.3,9.6 L49.7,8.4 L51.1,7.3" fill="none" stroke="#7c7c7c" stroke-width="0.75"/><path d="M72.1,4.7 L68.6,9.3 L64.4,11.6 L60.7,12.2 L57.8,11.8 L55.7,11.0 L54.1,10.1 L53.0,9.3 L52.1,8.5 L51.4,7.7 L50.9,7.1 L50.5,6.5 L50.2,5.9 L50.0,5.5 L49.8,5.0 L49.6,4.6 L49.4,4.2 L49.3,3.9 L49.2,3.6 L49.1,3.3 L49.0,3.0 L49.0,2.7 L48.9,2.5 L48.9,2.3 L48.8,2.0 L48.8,1.8 L48.8,1.6 L48.7,1.4 L48.7,1.2 L48.7,1.0 L48.7,0.8 L48.7,0.6 L48.7,0.5 L48.7,0.3 L48.7,0.1 L48.7,-0.1 L48.7,-0.3 L48.7,-0.5 L48.7,-0.6 L48.7,-0.8 L48.7,-1.0 L48.7,-1.2 L48.7,-1.4 L48.8,-1.6 L48.8,-1.8 L48.8,-2.0 L48.9,-2.3 L48.9,-2.5 L49.0,-2.7 L49.0,-3.0 L49.1,-3.3 L49.2,-3.6 L49.3,-3.9 L49.4,-4.2 L49.6,-4.6 L49.8,-5.0 L50.0,-5.5 L50.2,-5.9 L50.5,-6.5 L50.9,-7.1 L51.4,-7.7 L52.1,-8.5 L53.0,-9.3 L54.1,-10.1 L55.7,-11.0 L57.8,-11.8 L60.7,-12.2 L64.4,-11.6 L68.6,-9.3 L72.1,-4.7" fill="none" stroke="#7c7c7c" stroke-width="0.75"/><path d="M67.4,-28.1 L67.3,-28.0 L67.2,-28.0 L67.0,-27.9 L66.9,-27.9 L66.8,-27.8 L66.7,-27.8 L66.6,-27.7 L66.5,-27.7 L66.4,-27.6 L66.2,-27.5 L66.1,-27.5 L66.0,-27.4 L65.9,-27.4 L65.8,-27.3 L65.7,-27.2 L65.5,-27.2 L65.4,-27.1 L65.3,-27.0 L65.2,-26.9 L65.1,-26.9 L64.9,-26.8 L64.8,-26.7 L64.7,-26.6 L64.6,-26.5 L64.4,-26.4 L64.3,-26.3 L64.2,-26.2 L64.0,-26.1 L63.9,-26.0 L63.7,-25.9 L63.6,-25.8 L63.4,-25.6 L63.3,-25.5 L63.1,-25.4 L63.0,-25.2 L62.8,-25.1 L62.6,-24.9 L62.5,-24.7 L62.3,-24.5 L62.1,-24.3 L61.9,-24.1 L61.7,-23.9 L61.5,-23.6 L61.3,-23.4 L61.1,-23.1 L60.9,-22.8 L60.7,-22.5 L60.5,-22.1 L60.3,-21.8 L60.0,-21.3 L59.8,-20.9 L59.6,-20.4 L59.4,-19.8 L59.2,-19.2 L59.0,-18.6 L58.8,-17.8 L58.6,-17.0 L58.5,-16.1 L58.4,-15.1 L58.4,-14.0 L58.5,-12.8 L58.7,-11.5 L59.1,-10.0 L59.8,-8.4 L60.7,-6.7 L62.0,-5.0 L63.7,-3.4 L65.8,-1.9 L68.4,-0.7" fill="none" stroke="#7c7c7c" stroke-width="0.75"/><path d="M67.4,28.1 L67.3,28.0 L67.2,28.0 L67.0,27.9 L66.9,27.9 L66.8,27.8 L66.7,27.8 L66.6,27.7 L66.5,27.7 L66.4,27.6 L66.2,27.5 L66.1,27.5 L66.0,27.4 L65.9,27.4 L65.8,27.3 L65.7,27.2 L65.5,27.2 L65.4,27.1 L65.3,27.0 L65.2,26.9 L65.1,26.9 L64.9,26.8 L64.8,26.7 L64.7,26.6 L64.6,26.5 L64.4,26.4 L64.3,26.3 L64.2,26.2 L64.0,26.1 L63.9,26.0 L63.7,25.9 L63.6,25.8 L63.4,25.6 L63.3,25.5 L63.1,25.4 L63.0,25.2 L62.8,25.1 L62.6,24.9 L62.5,24.7 L62.3,24.5 L62.1,24.3 L61.9,24.1 L61.7,23.9 L61.5,23.6 L61.3,23.4 L61.1,23.1 L60.9,22.8 L60.7,22.5 L60.5,22.1 L60.3,21.8 L60.0,21.3 L59.8,20.9 L59.6,20.4 L59.4,19.8 L59.2,19.2 L59.0,18.6 L58.8,17.8 L58.6,17.0 L58.5,16.1 L58.4,15.1 L58.4,14.0 L58.5,12.8 L58.7,11.5 L59.1,10.0 L59.8,8.4 L60.7,6.7 L62.0,5.0 L63.7,3.4 L65.8,1.9 L68.4,0.7" fill="none" stroke="#7c7c7c" stroke-width="0.75"/><path d="M-73,0 H73" stroke="#6a6a6a" stroke-width="0.9" stroke-dasharray="3,2"/></g><circle cx="0" cy="0" r="73" fill="none" stroke="#7a7a7a" stroke-width="0.9"/><g clip-path="url(#smclip)"><circle cx="0" cy="36.50" r="81.62" fill="none" stroke="#0072BD" stroke-width="2.6"/><circle cx="0" cy="-36.50" r="81.62" fill="none" stroke="#0072BD" stroke-width="2.6"/></g><circle cx="-0.10" cy="1.10" r="5.3" fill="none" stroke="#D95319" stroke-width="2.4"/><circle cx="13.70" cy="1.10" r="5.3" fill="none" stroke="#77AC30" stroke-width="2.4"/></svg>
<div class="t" style="position:absolute;left:1056.80px;top:486.67px;font-size:7px;line-height:7px;color:#606060;font-weight:400;white-space:nowrap;transform:translateX(-50%);">+2</div>
<div class="t" style="position:absolute;left:1080.70px;top:520.57px;font-size:7px;line-height:7px;color:#606060;font-weight:400;white-space:nowrap;transform:translateX(-50%);">+5</div>
<div class="t" style="position:absolute;left:1091.00px;top:544.97px;font-size:7px;line-height:7px;color:#606060;font-weight:400;white-space:nowrap;transform:translateX(-50%);">+30</div>
<div class="t" style="position:absolute;left:1087.00px;top:549.97px;font-size:7px;line-height:7px;color:#606060;font-weight:400;white-space:nowrap;transform:translateX(-50%);">∞</div>
<div class="t" style="position:absolute;left:1091.20px;top:555.77px;font-size:7px;line-height:7px;color:#606060;font-weight:400;white-space:nowrap;transform:translateX(-50%);">-30</div>
<div class="t" style="position:absolute;left:1082.00px;top:580.87px;font-size:7px;line-height:7px;color:#606060;font-weight:400;white-space:nowrap;transform:translateX(-50%);">-5</div>
<div class="t" style="position:absolute;left:1056.80px;top:613.47px;font-size:7px;line-height:7px;color:#606060;font-weight:400;white-space:nowrap;transform:translateX(-50%);">-2</div>
<div class="t" style="position:absolute;left:1008.40px;top:628.57px;font-size:7px;line-height:7px;color:#606060;font-weight:400;white-space:nowrap;transform:translateX(-50%);">-1</div>
<div class="t" style="position:absolute;left:958.20px;top:612.67px;font-size:7px;line-height:7px;color:#606060;font-weight:400;white-space:nowrap;transform:translateX(-50%);">-0.5</div>
<div class="t" style="position:absolute;left:936.40px;top:580.87px;font-size:7px;line-height:7px;color:#606060;font-weight:400;white-space:nowrap;transform:translateX(-50%);">-0.2</div>
<div class="t" style="position:absolute;left:931.40px;top:549.47px;font-size:7px;line-height:7px;color:#606060;font-weight:400;white-space:nowrap;transform:translateX(-50%);">0.0</div>
<div class="t" style="position:absolute;left:1008.50px;top:636.85px;font-size:7.5px;line-height:7.5px;color:#606060;font-weight:400;white-space:nowrap;transform:translateX(-50%);">auto 3</div>
<svg style="position:absolute;left:917.6px;top:461.3px;overflow:visible;" width="126" height="93" viewBox="0 0 126 93"><rect x="0.5" y="0.5" width="124.5" height="91.5" fill="#fff" stroke="#262626" stroke-width="1"/><path d="M4.40,10.00 H43.90" stroke="#0072BD" stroke-width="2.4"/><path d="M4.40,24.56 H43.90" stroke="#D95319" stroke-width="2.4"/><circle cx="24.60" cy="24.56" r="5.2" fill="#fff" stroke="#D95319" stroke-width="2.2"/><path d="M4.40,39.12 H43.90" stroke="#EDB120" stroke-width="2.4"/><circle cx="24.60" cy="39.12" r="5.2" fill="#fff" stroke="#EDB120" stroke-width="2.2"/><path d="M4.40,53.68 H43.90" stroke="#7E2F8E" stroke-width="2.4"/><circle cx="24.60" cy="53.68" r="5.2" fill="#fff" stroke="#7E2F8E" stroke-width="2.2"/><path d="M4.40,68.24 H43.90" stroke="#77AC30" stroke-width="2.4"/><circle cx="24.60" cy="68.24" r="5.2" fill="#fff" stroke="#77AC30" stroke-width="2.2"/><path d="M4.40,82.80 H43.90" stroke="#4DBEEE" stroke-width="2.4"/></svg>
<div class="t" style="position:absolute;left:965.70px;top:464.90px;font-size:13px;line-height:13px;color:#333333;font-weight:400;white-space:nowrap;transform:scaleX(0.885);transform-origin:left center;">Loaded Q = 2</div>
<div class="t" style="position:absolute;left:965.70px;top:479.46px;font-size:13px;line-height:13px;color:#333333;font-weight:400;white-space:nowrap;transform:scaleX(0.885);transform-origin:left center;">z_in</div>
<div class="t" style="position:absolute;left:965.70px;top:494.02px;font-size:13px;line-height:13px;color:#333333;font-weight:400;white-space:nowrap;transform:scaleX(0.885);transform-origin:left center;">z₁</div>
<div class="t" style="position:absolute;left:965.70px;top:508.58px;font-size:13px;line-height:13px;color:#333333;font-weight:400;white-space:nowrap;transform:scaleX(0.885);transform-origin:left center;">z₂</div>
<div class="t" style="position:absolute;left:965.70px;top:523.14px;font-size:13px;line-height:13px;color:#333333;font-weight:400;white-space:nowrap;transform:scaleX(0.885);transform-origin:left center;">z_out</div>
<div class="t" style="position:absolute;left:965.70px;top:537.70px;font-size:13px;line-height:13px;color:#333333;font-weight:400;white-space:nowrap;transform:scaleX(0.885);transform-origin:left center;">Matching path</div>
<div style="position:absolute;left:826px;top:666px;width:364px;height:99px;border:1px solid #a8a8a8;box-sizing:border-box;box-shadow:inset 1px 1px 0 #fff,inset -1px -1px 0 #fff"></div>
<div style="position:absolute;left:827px;top:686px;width:362px;height:1px;background:#a8a8a8"></div>
<div class="t" style="position:absolute;left:831.20px;top:670.34px;font-size:12px;line-height:12px;color:#333333;font-weight:400;white-space:nowrap;">Plot Options</div>
<div class="t" style="position:absolute;left:848.00px;top:702.34px;font-size:12px;line-height:12px;color:#333333;font-weight:400;white-space:nowrap;">Impedance direction</div>
<div style="position:absolute;left:969px;top:697px;width:116px;height:23px;background:#f4f4f4;border:1px solid #9a9a9a;border-radius:5px;box-sizing:border-box"></div>
<div class="t" style="position:absolute;left:974.50px;top:702.34px;font-size:12px;line-height:12px;color:#333333;font-weight:400;white-space:nowrap;">Source to Load</div>
<svg style="position:absolute;left:1069px;top:704.5px;overflow:visible;" width="9" height="8" viewBox="0 0 9 8"><polygon points="0,0 8.5,0 4.25,7" fill="#444"/></svg>
<div class="t" style="position:absolute;left:848.00px;top:735.74px;font-size:12px;line-height:12px;color:#333333;font-weight:400;white-space:nowrap;">Z0</div>
<div style="position:absolute;left:969px;top:730px;width:116px;height:23px;background:#ffffff;border:1px solid #9a9a9a;box-sizing:border-box"></div>
<div class="t" style="position:absolute;right:121.00px;top:735.74px;font-size:12px;line-height:12px;color:#333333;font-weight:400;white-space:nowrap;">50 Ω</div>
</body></html>
